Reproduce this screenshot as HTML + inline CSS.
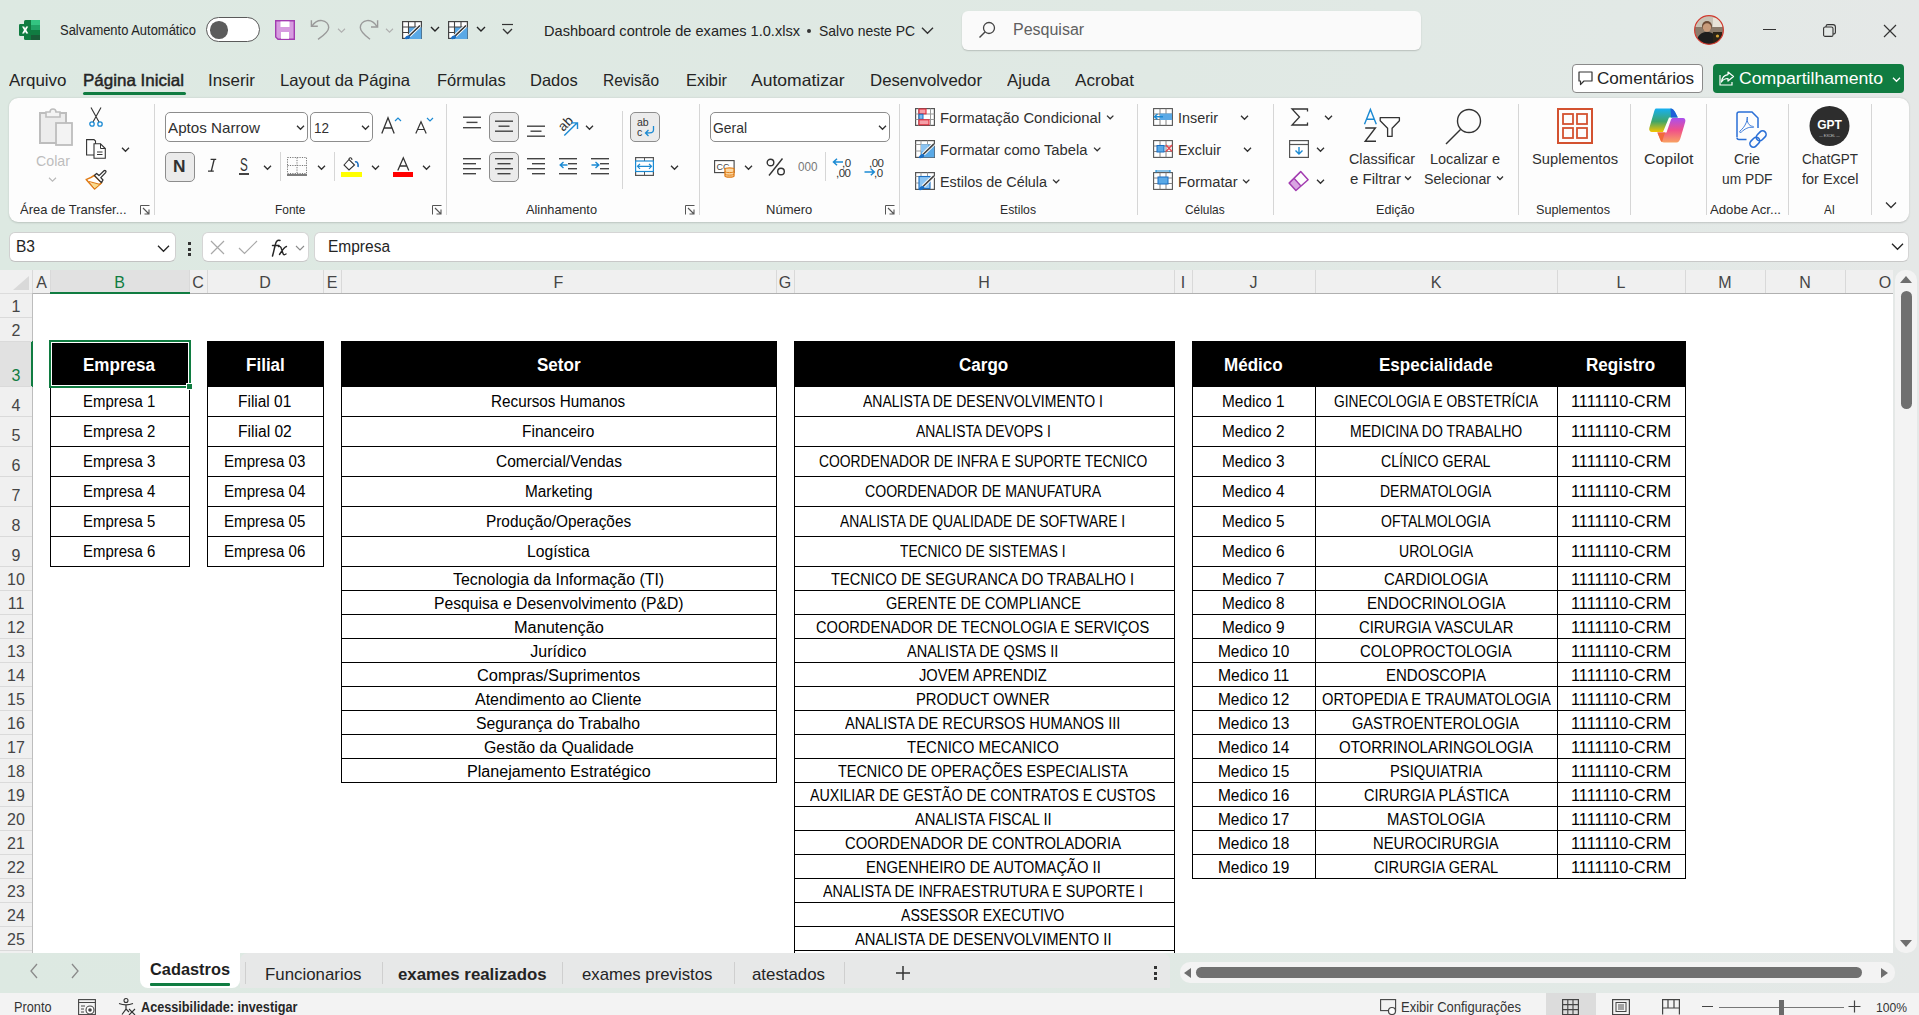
<!DOCTYPE html><html><head><meta charset="utf-8"><style>
html,body{margin:0;padding:0;width:1919px;height:1015px;overflow:hidden;}
body{position:relative;background:linear-gradient(90deg,#dde9e2 0%,#e0e9e4 60%,#e2e9e6 85%,#e5e8e7 100%);font-family:"Liberation Sans",sans-serif;}
.t{position:absolute;white-space:nowrap;line-height:1;transform-origin:0 0;}
svg{overflow:visible}
</style></head><body>
<svg style="position:absolute;left:19px;top:20px;" width="21" height="20" viewBox="0 0 21 20"><rect x="5" y="0" width="16" height="20" rx="1.5" fill="#107c41"/>
      <rect x="12" y="0" width="9" height="5" fill="#33c481"/><rect x="12" y="5" width="9" height="5" fill="#21a366"/>
      <rect x="12" y="10" width="9" height="5" fill="#107c41"/><rect x="12" y="15" width="9" height="5" fill="#185c37"/>
      <rect x="0" y="4" width="12" height="12" rx="1.2" fill="#107c41"/>
      <path d="M3 6.5 L5.2 6.5 L6.1 8.6 L7.1 6.5 L9.2 6.5 L7.3 10 L9.3 13.5 L7.1 13.5 L6.1 11.4 L5.1 13.5 L3 13.5 L5 10 Z" fill="#fff"/></svg>
<div class="t" style="left:60.00px;top:23.10px;font-size:14px;color:#242424;transform:scaleX(0.9246);">Salvamento Automático</div>
<div style="position:absolute;left:206px;top:17px;width:54px;height:25px;border:1.3px solid #5a5a5a;border-radius:13px;background:#fff;box-sizing:border-box"></div>
<div style="position:absolute;left:210px;top:21px;width:17.5px;height:17.5px;background:#5c5c5c;border-radius:50%"></div>
<svg style="position:absolute;left:275px;top:20px;" width="20" height="20" viewBox="0 0 20 20"><path d="M0.7 0.7 H19.3 V19.3 H3 L0.7 17 Z" fill="#d79be0" stroke="#a23cb0" stroke-width="1.4"/>
      <rect x="5.5" y="1.5" width="9" height="5.5" fill="#fff"/><rect x="6" y="12" width="8" height="6.8" fill="#fff"/></svg>
<svg style="position:absolute;left:310px;top:20px;" width="20" height="20" viewBox="0 0 20 20"><path d="M1.4 0.3 V6.3 H7.8" fill="none" stroke="#9a9a9a" stroke-width="1.4"/><path d="M2 6 C5 1.5 9 0.3 12 0.6 C16 1 18.7 4 18.7 7.5 C18.7 11 16 14 8 19.3" fill="none" stroke="#9a9a9a" stroke-width="1.4"/></svg>
<svg style="position:absolute;left:337.0px;top:26.5px;" width="9.0" height="7.0" viewBox="0 0 9.0 7.0"><path d="M1 1.75 L4.5 5.25 L8.0 1.75" fill="none" stroke="#b0b0b0" stroke-width="1.1"/></svg>
<svg style="position:absolute;left:359px;top:20px;" width="20" height="20" viewBox="0 0 20 20"><path d="M18.6 0.3 V7 H12" fill="none" stroke="#9a9a9a" stroke-width="1.4"/><path d="M18 6.7 C15 1.5 11 0.3 8 0.6 C4 1 1.3 4 1.3 7.5 C1.3 11 4 14 11 19.3" fill="none" stroke="#9a9a9a" stroke-width="1.4"/></svg>
<svg style="position:absolute;left:385.0px;top:26.5px;" width="9.0" height="7.0" viewBox="0 0 9.0 7.0"><path d="M1 1.75 L4.5 5.25 L8.0 1.75" fill="none" stroke="#b0b0b0" stroke-width="1.1"/></svg>
<svg style="position:absolute;left:402px;top:21px;" width="20" height="18" viewBox="0 0 20 18"><rect x="0.6" y="0.6" width="18.8" height="16.8" fill="#fff" stroke="#444" stroke-width="1.2"/>
        <rect x="6.5" y="6" width="13" height="12" fill="#5aa9e6"/>
        <path d="M0.6 6 H19.4 M0.6 11.5 H6.5 M6.5 0.6 V17.4 M13 0.6 V6" stroke="#444" stroke-width="1.1"/>
        <path d="M6.5 15.5 L18 4.5" stroke="#fff" stroke-width="3.4"/><path d="M6.5 15.5 L18 4.5" stroke="#333" stroke-width="1.6"/>
        <path d="M2.5 18 C3.5 15 5 14 7.5 14.5 L8.5 16 C8 17.5 6 18.5 2.5 18 Z" fill="#1b6ec2"/></svg>
<svg style="position:absolute;left:429.5px;top:25px;" width="10" height="8" viewBox="0 0 10 8"><path d="M1 2.0 L5 6.0 L9 2.0" fill="none" stroke="#242424" stroke-width="1.4"/></svg>
<svg style="position:absolute;left:448px;top:21px;" width="20" height="18" viewBox="0 0 20 18"><rect x="0.6" y="0.6" width="18.8" height="16.8" fill="#fff" stroke="#444" stroke-width="1.2"/>
        <rect x="6.5" y="6" width="13" height="12" fill="#5aa9e6"/>
        <path d="M0.6 6 H19.4 M0.6 11.5 H6.5 M6.5 0.6 V17.4 M13 0.6 V6" stroke="#444" stroke-width="1.1"/>
        <path d="M6.5 15.5 L18 4.5" stroke="#fff" stroke-width="3.4"/><path d="M6.5 15.5 L18 4.5" stroke="#333" stroke-width="1.6"/>
        <path d="M2.5 18 C3.5 15 5 14 7.5 14.5 L8.5 16 C8 17.5 6 18.5 2.5 18 Z" fill="#1b6ec2"/></svg>
<svg style="position:absolute;left:475.5px;top:25px;" width="10" height="8" viewBox="0 0 10 8"><path d="M1 2.0 L5 6.0 L9 2.0" fill="none" stroke="#242424" stroke-width="1.4"/></svg>
<svg style="position:absolute;left:501px;top:23px;" width="13" height="13" viewBox="0 0 13 13"><path d="M1 1.5 H12" stroke="#333" stroke-width="1.2"/><path d="M2 6 L6.5 10.5 L11 6" fill="none" stroke="#333" stroke-width="1.3"/></svg>
<div class="t" style="left:543.50px;top:23.25px;font-size:15px;color:#242424;transform:scaleX(0.9716);">Dashboard controle de exames 1.0.xlsx</div>
<div style="position:absolute;left:807px;top:29px;width:4px;height:4px;background:#333;border-radius:50%"></div>
<div class="t" style="left:819.00px;top:23.25px;font-size:15px;color:#242424;transform:scaleX(0.9285);">Salvo neste PC</div>
<svg style="position:absolute;left:920.5px;top:24.5px;" width="13.0" height="11.0" viewBox="0 0 13.0 11.0"><path d="M1 2.75 L6.5 8.25 L12.0 2.75" fill="none" stroke="#333" stroke-width="1.4"/></svg>
<div style="position:absolute;left:962px;top:11px;width:459px;height:39px;background:#fafafa;border-radius:6px;box-shadow:0 1px 1.5px rgba(0,0,0,0.18)"></div>
<svg style="position:absolute;left:978px;top:21px;" width="18" height="18" viewBox="0 0 18 18"><circle cx="11" cy="7" r="5.5" fill="none" stroke="#444" stroke-width="1.3"/><path d="M7 11 L1.5 16.5" stroke="#444" stroke-width="1.4"/></svg>
<div class="t" style="left:1013.00px;top:21.90px;font-size:16px;color:#5f5f5f;">Pesquisar</div>
<svg style="position:absolute;left:1694px;top:15px;" width="30" height="30" viewBox="0 0 30 30"><defs><clipPath id="av"><circle cx="15" cy="15" r="14.3"/></clipPath></defs>
      <g clip-path="url(#av)"><rect width="30" height="30" fill="#8a7a6a"/><rect x="0" y="0" width="30" height="12" fill="#c9c2b5"/>
      <rect x="19" y="3" width="9" height="9" fill="#e8e3d8"/><circle cx="13" cy="11" r="5" fill="#6b4a35"/><circle cx="13" cy="12.5" r="4.2" fill="#c89b7b"/>
      <path d="M2 30 C3 19 8 17 13 17 C18 17 23 19 24 30 Z" fill="#1e1e1e"/><rect x="19" y="17" width="9" height="11" fill="#2b2418"/><circle cx="23.5" cy="21" r="1.6" fill="#d4a437"/></g>
      <circle cx="15" cy="15" r="14.4" fill="none" stroke="#d23b30" stroke-width="1.2"/></svg>
<div style="position:absolute;left:1763px;top:29px;width:13px;height:1.2px;background:#333"></div>
<svg style="position:absolute;left:1823px;top:24px;" width="13" height="13" viewBox="0 0 13 13"><rect x="0.6" y="3" width="9.4" height="9.4" rx="1.5" fill="none" stroke="#333" stroke-width="1.1"/><path d="M3 3 V2.5 C3 1.5 3.5 0.6 4.8 0.6 H10 C11.4 0.6 12.4 1.6 12.4 3 V8.2 C12.4 9.5 11.5 10 10 10" fill="none" stroke="#333" stroke-width="1.1"/></svg>
<svg style="position:absolute;left:1883px;top:24px;" width="14" height="14" viewBox="0 0 14 14"><path d="M1 1 L13 13 M13 1 L1 13" stroke="#333" stroke-width="1.2"/></svg>
<div class="t" style="left:8.50px;top:71.97px;font-size:16.5px;color:#242424;transform:scaleX(1.0277);">Arquivo</div>
<div class="t" style="left:83.00px;top:71.97px;font-size:16.5px;color:#242424;transform:scaleX(1.0290);-webkit-text-stroke:0.45px #242424;">Página Inicial</div>
<div class="t" style="left:208.00px;top:71.97px;font-size:16.5px;color:#242424;transform:scaleX(1.0252);">Inserir</div>
<div class="t" style="left:280.00px;top:71.97px;font-size:16.5px;color:#242424;transform:scaleX(1.0121);">Layout da Página</div>
<div class="t" style="left:437.00px;top:71.97px;font-size:16.5px;color:#242424;">Fórmulas</div>
<div class="t" style="left:530.00px;top:71.97px;font-size:16.5px;color:#242424;">Dados</div>
<div class="t" style="left:603.00px;top:71.97px;font-size:16.5px;color:#242424;transform:scaleX(0.9394);">Revisão</div>
<div class="t" style="left:686.00px;top:71.97px;font-size:16.5px;color:#242424;transform:scaleX(0.9937);">Exibir</div>
<div class="t" style="left:751.00px;top:71.97px;font-size:16.5px;color:#242424;transform:scaleX(1.0620);">Automatizar</div>
<div class="t" style="left:870.00px;top:71.97px;font-size:16.5px;color:#242424;transform:scaleX(1.0176);">Desenvolvedor</div>
<div class="t" style="left:1007.00px;top:71.97px;font-size:16.5px;color:#242424;transform:scaleX(1.0189);">Ajuda</div>
<div class="t" style="left:1075.00px;top:71.97px;font-size:16.5px;color:#242424;transform:scaleX(1.0375);">Acrobat</div>
<div style="position:absolute;left:83px;top:92px;width:103px;height:3px;background:#107c41;border-radius:2px"></div>
<div style="position:absolute;left:1572px;top:64px;width:131px;height:29px;background:#fff;border:1px solid #8a8a8a;border-radius:4px;box-sizing:border-box"></div>
<svg style="position:absolute;left:1578px;top:71px;" width="15" height="15" viewBox="0 0 15 15"><path d="M1 1 H14 V10 H6 L2.5 13.5 V10 H1 Z" fill="none" stroke="#333" stroke-width="1.2" stroke-linejoin="round"/></svg>
<div class="t" style="left:1597.00px;top:71.40px;font-size:16px;color:#242424;transform:scaleX(1.0694);">Comentários</div>
<div style="position:absolute;left:1713px;top:64px;width:191px;height:29px;background:#107c41;border-radius:4px"></div>
<svg style="position:absolute;left:1719px;top:70px;" width="16" height="16" viewBox="0 0 16 16"><path d="M9 2 L14.5 6.5 L9 11 V8.5 C6 8.5 4 9.5 2.5 12 C3 7.5 5.5 5 9 4.6 Z" fill="none" stroke="#fff" stroke-width="1.2" stroke-linejoin="round"/><path d="M1 5 V15 H13 V12" fill="none" stroke="#fff" stroke-width="1.2"/></svg>
<div class="t" style="left:1739.00px;top:71.40px;font-size:16px;color:#fff;transform:scaleX(1.1015);">Compartilhamento</div>
<svg style="position:absolute;left:1891.5px;top:75.5px;" width="9.0" height="7.0" viewBox="0 0 9.0 7.0"><path d="M1 1.75 L4.5 5.25 L8.0 1.75" fill="none" stroke="#fff" stroke-width="1.3"/></svg>
<div style="position:absolute;left:9px;top:98px;width:1900px;height:124px;background:#fdfdfd;border-radius:9px;box-shadow:0 0.5px 2px rgba(0,0,0,0.16)"></div>
<div style="position:absolute;left:154px;top:104px;width:1px;height:111px;background:#d6d6d6"></div>
<div style="position:absolute;left:446px;top:104px;width:1px;height:111px;background:#d6d6d6"></div>
<div style="position:absolute;left:699px;top:104px;width:1px;height:111px;background:#d6d6d6"></div>
<div style="position:absolute;left:899px;top:104px;width:1px;height:111px;background:#d6d6d6"></div>
<div style="position:absolute;left:1137px;top:104px;width:1px;height:111px;background:#d6d6d6"></div>
<div style="position:absolute;left:1273px;top:104px;width:1px;height:111px;background:#d6d6d6"></div>
<div style="position:absolute;left:1518px;top:104px;width:1px;height:111px;background:#d6d6d6"></div>
<div style="position:absolute;left:1630px;top:104px;width:1px;height:111px;background:#d6d6d6"></div>
<div style="position:absolute;left:1706px;top:104px;width:1px;height:111px;background:#d6d6d6"></div>
<div style="position:absolute;left:1788px;top:104px;width:1px;height:111px;background:#d6d6d6"></div>
<div style="position:absolute;left:1871px;top:104px;width:1px;height:111px;background:#d6d6d6"></div>
<div class="t" style="left:20.00px;top:202.53px;font-size:13.5px;color:#2b2b2b;transform:scaleX(0.9589);">Área de Transfer...</div>
<div class="t" style="left:274.50px;top:202.53px;font-size:13.5px;color:#2b2b2b;transform:scaleX(0.8835);">Fonte</div>
<div class="t" style="left:526.00px;top:202.53px;font-size:13.5px;color:#2b2b2b;transform:scaleX(0.9460);">Alinhamento</div>
<div class="t" style="left:765.70px;top:202.53px;font-size:13.5px;color:#2b2b2b;transform:scaleX(0.9642);">Número</div>
<div class="t" style="left:999.50px;top:202.53px;font-size:13.5px;color:#2b2b2b;transform:scaleX(0.9054);">Estilos</div>
<div class="t" style="left:1184.60px;top:202.53px;font-size:13.5px;color:#2b2b2b;transform:scaleX(0.8795);">Células</div>
<div class="t" style="left:1376.00px;top:202.53px;font-size:13.5px;color:#2b2b2b;transform:scaleX(0.9351);">Edição</div>
<div class="t" style="left:1536.00px;top:202.53px;font-size:13.5px;color:#2b2b2b;transform:scaleX(0.9391);">Suplementos</div>
<div class="t" style="left:1710.00px;top:202.53px;font-size:13.5px;color:#2b2b2b;transform:scaleX(0.9752);">Adobe Acr...</div>
<div class="t" style="left:1823.80px;top:202.53px;font-size:13.5px;color:#2b2b2b;transform:scaleX(0.8545);">AI</div>
<svg style="position:absolute;left:140px;top:205px;" width="10" height="10" viewBox="0 0 10 10"><path d="M0.5 9.5 V0.5 H9.5" fill="none" stroke="#555" stroke-width="1"/><path d="M3 3 L9 9 M9 4.5 V9 H4.5" fill="none" stroke="#555" stroke-width="1.1"/></svg>
<svg style="position:absolute;left:431.5px;top:205px;" width="10" height="10" viewBox="0 0 10 10"><path d="M0.5 9.5 V0.5 H9.5" fill="none" stroke="#555" stroke-width="1"/><path d="M3 3 L9 9 M9 4.5 V9 H4.5" fill="none" stroke="#555" stroke-width="1.1"/></svg>
<svg style="position:absolute;left:685px;top:205px;" width="10" height="10" viewBox="0 0 10 10"><path d="M0.5 9.5 V0.5 H9.5" fill="none" stroke="#555" stroke-width="1"/><path d="M3 3 L9 9 M9 4.5 V9 H4.5" fill="none" stroke="#555" stroke-width="1.1"/></svg>
<svg style="position:absolute;left:885px;top:205px;" width="10" height="10" viewBox="0 0 10 10"><path d="M0.5 9.5 V0.5 H9.5" fill="none" stroke="#555" stroke-width="1"/><path d="M3 3 L9 9 M9 4.5 V9 H4.5" fill="none" stroke="#555" stroke-width="1.1"/></svg>
<svg style="position:absolute;left:39px;top:108px;" width="34" height="38" viewBox="0 0 34 38"><rect x="1" y="5" width="26" height="30" fill="#ececec" stroke="#bdbdbd" stroke-width="2"/>
      <path d="M7 9 V4 H11 C11 0 17 0 17 4 H21 V9 Z" fill="#f4f4f4" stroke="#bdbdbd" stroke-width="1.6"/>
      <rect x="17" y="15" width="16" height="22" fill="#f3f3f3" stroke="#bdbdbd" stroke-width="1.8"/></svg>
<div class="t" style="left:35.50px;top:152.75px;font-size:15px;color:#bdbdbd;transform:scaleX(0.9485);">Colar</div>
<svg style="position:absolute;left:48.0px;top:175.5px;" width="9.0" height="7.0" viewBox="0 0 9.0 7.0"><path d="M1 1.75 L4.5 5.25 L8.0 1.75" fill="none" stroke="#b8b8b8" stroke-width="1.1"/></svg>
<svg style="position:absolute;left:89px;top:107px;" width="14" height="20" viewBox="0 0 14 20"><path d="M2 0.5 L10 15 M12 0.5 L4 15" stroke="#333" stroke-width="1.1"/><circle cx="3" cy="17" r="2.2" fill="#fff" stroke="#1b8ad3" stroke-width="1.3"/><circle cx="11" cy="17" r="2.2" fill="#fff" stroke="#1b8ad3" stroke-width="1.3"/></svg>
<svg style="position:absolute;left:86px;top:139px;" width="20" height="20" viewBox="0 0 20 20"><path d="M0.6 0.6 H8 L9.5 2 V16 H0.6 Z" fill="#fff" stroke="#333" stroke-width="1.1"/>
      <path d="M8 4.8 H14.5 L19.3 9.5 V19.3 H8 Z" fill="#fff" stroke="#333" stroke-width="1.1"/><path d="M14.5 4.8 V9.5 H19.3" fill="none" stroke="#333" stroke-width="1"/>
      <path d="M11 13 H16.5 M11 15.5 H16.5" stroke="#333" stroke-width="1"/></svg>
<svg style="position:absolute;left:120.5px;top:145.5px;" width="9.0" height="7.0" viewBox="0 0 9.0 7.0"><path d="M1 1.75 L4.5 5.25 L8.0 1.75" fill="none" stroke="#303030" stroke-width="1.3"/></svg>
<svg style="position:absolute;left:80px;top:165px;" width="30" height="30" viewBox="0 0 30 30"><path d="M14.2 10.4 C11 13 8.5 13.6 6.2 14.4 L14.6 24 L21.6 17.6 Z" fill="#fff" stroke="#e07b14" stroke-width="1.5" stroke-linejoin="round"/><path d="M10.5 17.5 L19.5 19.5 L14.8 23 Z" fill="#f9dc8c"/><path d="M9 16.5 L20.5 19.5" stroke="#e07b14" stroke-width="1.2"/><path d="M14.4 10.4 L16.6 8.4 L19 10.6 L24 5.8 C25 4.9 26.8 6.2 25.6 7.6 L20.8 12.6 L23 15 L21.4 17.6 Z" fill="#fff" stroke="#333" stroke-width="1.3" stroke-linejoin="round"/></svg>
<div style="position:absolute;left:165px;top:112px;width:143px;height:30px;background:#fff;border:1px solid #8d8d8d;border-radius:5px;box-sizing:border-box"></div>
<div class="t" style="left:168.00px;top:120.25px;font-size:15px;color:#303030;transform:scaleX(1.0125);">Aptos Narrow</div>
<svg style="position:absolute;left:295.5px;top:123.5px;" width="9.0" height="7.0" viewBox="0 0 9.0 7.0"><path d="M1 1.75 L4.5 5.25 L8.0 1.75" fill="none" stroke="#303030" stroke-width="1.3"/></svg>
<div style="position:absolute;left:310px;top:112px;width:63px;height:30px;background:#fff;border:1px solid #8d8d8d;border-radius:5px;box-sizing:border-box"></div>
<div class="t" style="left:313.60px;top:120.25px;font-size:15px;color:#303030;transform:scaleX(0.8990);">12</div>
<svg style="position:absolute;left:360.5px;top:123.5px;" width="9.0" height="7.0" viewBox="0 0 9.0 7.0"><path d="M1 1.75 L4.5 5.25 L8.0 1.75" fill="none" stroke="#303030" stroke-width="1.3"/></svg>
<svg style="position:absolute;left:381px;top:117px;" width="16" height="17" viewBox="0 0 16 17"><path d="M0.8 16.5 L7 0.8 L13.2 16.5 M3 11 H11" fill="none" stroke="#333" stroke-width="1.3"/></svg>
<svg style="position:absolute;left:394px;top:117px;" width="8" height="5" viewBox="0 0 8 5"><path d="M1 4 L4 1 L7 4" fill="none" stroke="#1b8ad3" stroke-width="1.2"/></svg>
<svg style="position:absolute;left:415px;top:121px;" width="13" height="13" viewBox="0 0 13 13"><path d="M0.8 12.5 L6 0.8 L11.2 12.5 M2.6 8.5 H9.4" fill="none" stroke="#333" stroke-width="1.2"/></svg>
<svg style="position:absolute;left:426px;top:117px;" width="8" height="5" viewBox="0 0 8 5"><path d="M1 1 L4 4 L7 1" fill="none" stroke="#1b8ad3" stroke-width="1.2"/></svg>
<div style="position:absolute;left:165px;top:152px;width:30px;height:30px;background:#ebebeb;border:1px solid #8d8d8d;border-radius:5px;box-sizing:border-box"></div>
<div class="t" style="left:173.00px;top:157.55px;font-size:17px;font-weight:bold;color:#303030;transform:scaleX(1.0181);">N</div>
<svg style="position:absolute;left:207px;top:158px;" width="12" height="15" viewBox="0 0 12 15"><path d="M3.6 1.4 H9.2 M1 13.2 H6.8" stroke="#333" stroke-width="1.3"/><path d="M7.2 1.4 L4.3 13.2" stroke="#333" stroke-width="1.4"/></svg>
<div class="t" style="left:239.60px;top:157.12px;font-size:17.5px;color:#303030;transform:scaleX(0.6682);">S</div>
<div style="position:absolute;left:239px;top:173px;width:10px;height:1.7px;background:#444"></div>
<svg style="position:absolute;left:262.5px;top:163.5px;" width="9.0" height="7.0" viewBox="0 0 9.0 7.0"><path d="M1 1.75 L4.5 5.25 L8.0 1.75" fill="none" stroke="#303030" stroke-width="1.3"/></svg>
<div style="position:absolute;left:280px;top:152px;width:1px;height:29px;background:#d6d6d6"></div>
<svg style="position:absolute;left:287px;top:157px;" width="20" height="19" viewBox="0 0 20 19"><rect x="0.5" y="0.5" width="19" height="16" fill="none" stroke="#777" stroke-width="1" stroke-dasharray="1.2 1.2"/><path d="M10 0.5 V17 M0.5 8.5 H19.5" stroke="#777" stroke-width="1" stroke-dasharray="1.2 1.2"/><path d="M0 18 H20" stroke="#444" stroke-width="1.4"/></svg>
<svg style="position:absolute;left:316.5px;top:163.5px;" width="9.0" height="7.0" viewBox="0 0 9.0 7.0"><path d="M1 1.75 L4.5 5.25 L8.0 1.75" fill="none" stroke="#303030" stroke-width="1.3"/></svg>
<div style="position:absolute;left:334px;top:152px;width:1px;height:29px;background:#d6d6d6"></div>
<svg style="position:absolute;left:341px;top:157px;" width="21" height="20" viewBox="0 0 21 20"><path d="M3 8 L8 2.5 L13.5 8 L8 13 Z" fill="#fff" stroke="#333" stroke-width="1.1"/><path d="M8 2.5 C8 0 11 0 11 3" fill="none" stroke="#333" stroke-width="1.1"/><path d="M14 5 C16.5 4 17.5 7 17 10" fill="none" stroke="#1b6ec2" stroke-width="1.6"/><rect x="0" y="15" width="21" height="5" fill="#ffff00"/></svg>
<svg style="position:absolute;left:370.5px;top:163.5px;" width="9.0" height="7.0" viewBox="0 0 9.0 7.0"><path d="M1 1.75 L4.5 5.25 L8.0 1.75" fill="none" stroke="#303030" stroke-width="1.3"/></svg>
<svg style="position:absolute;left:397px;top:157px;" width="13" height="14" viewBox="0 0 13 14"><path d="M0.8 13.5 L6.3 0.8 L11.8 13.5 M2.8 9 H9.8" fill="none" stroke="#333" stroke-width="1.3"/></svg>
<div style="position:absolute;left:393px;top:172px;width:20px;height:5px;background:#ff0000"></div>
<svg style="position:absolute;left:421.5px;top:163.5px;" width="9.0" height="7.0" viewBox="0 0 9.0 7.0"><path d="M1 1.75 L4.5 5.25 L8.0 1.75" fill="none" stroke="#303030" stroke-width="1.3"/></svg>
<div style="position:absolute;left:489px;top:112px;width:30px;height:30px;background:#ebebeb;border:1px solid #8d8d8d;border-radius:5px;box-sizing:border-box"></div>
<div style="position:absolute;left:489px;top:152px;width:30px;height:30px;background:#ebebeb;border:1px solid #8d8d8d;border-radius:5px;box-sizing:border-box"></div>
<svg style="position:absolute;left:463px;top:0px;" width="20" height="200" viewBox="0 0 20 200"><rect x="0" y="116.5" width="18" height="1.4" fill="#444"/><rect x="3.5" y="121.7" width="11" height="1.4" fill="#444"/><rect x="0" y="127" width="18" height="1.4" fill="#444"/></svg>
<svg style="position:absolute;left:495px;top:0px;" width="20" height="200" viewBox="0 0 20 200"><rect x="0" y="120.5" width="18" height="1.4" fill="#444"/><rect x="3.5" y="125.5" width="11" height="1.4" fill="#444"/><rect x="0" y="130.5" width="18" height="1.4" fill="#444"/></svg>
<svg style="position:absolute;left:527px;top:0px;" width="20" height="200" viewBox="0 0 20 200"><rect x="0" y="125.5" width="18" height="1.4" fill="#444"/><rect x="3.5" y="130.5" width="11" height="1.4" fill="#444"/><rect x="0" y="135.5" width="18" height="1.4" fill="#444"/></svg>
<svg style="position:absolute;left:463px;top:0px;" width="20" height="200" viewBox="0 0 20 200"><rect x="0" y="158" width="18" height="1.4" fill="#444"/><rect x="0" y="163" width="13" height="1.4" fill="#444"/><rect x="0" y="168" width="18" height="1.4" fill="#444"/><rect x="0" y="173" width="13" height="1.4" fill="#444"/></svg>
<svg style="position:absolute;left:495px;top:0px;" width="20" height="200" viewBox="0 0 20 200"><rect x="0" y="158" width="18" height="1.4" fill="#444"/><rect x="2.5" y="163" width="13" height="1.4" fill="#444"/><rect x="0" y="168" width="18" height="1.4" fill="#444"/><rect x="2.5" y="173" width="13" height="1.4" fill="#444"/></svg>
<svg style="position:absolute;left:527px;top:0px;" width="20" height="200" viewBox="0 0 20 200"><rect x="0" y="158" width="18" height="1.4" fill="#444"/><rect x="5" y="163" width="13" height="1.4" fill="#444"/><rect x="0" y="168" width="18" height="1.4" fill="#444"/><rect x="5" y="173" width="13" height="1.4" fill="#444"/></svg>
<svg style="position:absolute;left:559px;top:0px;" width="20" height="200" viewBox="0 0 20 200"><rect x="0" y="158" width="18" height="1.4" fill="#444"/><rect x="9" y="163" width="9" height="1.4" fill="#444"/><rect x="9" y="168" width="9" height="1.4" fill="#444"/><rect x="0" y="173" width="18" height="1.4" fill="#444"/></svg>
<svg style="position:absolute;left:591px;top:0px;" width="20" height="200" viewBox="0 0 20 200"><rect x="0" y="158" width="18" height="1.4" fill="#444"/><rect x="9" y="163" width="9" height="1.4" fill="#444"/><rect x="9" y="168" width="9" height="1.4" fill="#444"/><rect x="0" y="173" width="18" height="1.4" fill="#444"/></svg>
<svg style="position:absolute;left:559px;top:161px;" width="9" height="8" viewBox="0 0 9 8"><path d="M8.5 4 H1.5 M4.5 1 L1.2 4 L4.5 7" fill="none" stroke="#1b8ad3" stroke-width="1.4"/></svg>
<svg style="position:absolute;left:591px;top:161px;" width="9" height="8" viewBox="0 0 9 8"><path d="M0.5 4 H7.5 M4.5 1 L7.8 4 L4.5 7" fill="none" stroke="#1b8ad3" stroke-width="1.4"/></svg>
<svg style="position:absolute;left:556px;top:112px;" width="22" height="25" viewBox="0 0 22 25"><text x="-0.5" y="17" transform="rotate(-45 7 9)" font-family="Liberation Sans" font-size="13.5" fill="#333">ab</text><path d="M8.3 23.6 L21 10.9 M15 10.9 H21.5 V17" fill="none" stroke="#1b8ad3" stroke-width="1.4"/></svg>
<svg style="position:absolute;left:585.0px;top:123.5px;" width="9.0" height="7.0" viewBox="0 0 9.0 7.0"><path d="M1 1.75 L4.5 5.25 L8.0 1.75" fill="none" stroke="#303030" stroke-width="1.3"/></svg>
<div style="position:absolute;left:622px;top:111px;width:1px;height:78px;background:#d6d6d6"></div>
<div style="position:absolute;left:630px;top:112px;width:30px;height:30px;background:#ebebeb;border:1px solid #8d8d8d;border-radius:5px;box-sizing:border-box"></div>
<svg style="position:absolute;left:637px;top:117px;" width="18" height="21" viewBox="0 0 18 21"><text x="0" y="9" font-family="Liberation Sans" font-size="10.5" fill="#333">ab</text><text x="0" y="19" font-family="Liberation Sans" font-size="10.5" fill="#333">c</text><path d="M16.5 9 V13 C16.5 16 14 16 9 16 M11.5 13 L8.5 16 L11.5 19" fill="none" stroke="#1b8ad3" stroke-width="1.3"/></svg>
<svg style="position:absolute;left:635px;top:157px;" width="19" height="19" viewBox="0 0 19 19"><rect x="0.6" y="0.6" width="17.8" height="17.8" fill="#fff" stroke="#555" stroke-width="1.2"/><path d="M9.5 0.6 V18.4" stroke="#555" stroke-width="1"/><rect x="0.6" y="4" width="17.8" height="10.5" fill="#fff" stroke="#1b8ad3" stroke-width="1.2"/><path d="M2.5 9.3 H16.5 M5 6.8 L2.5 9.3 L5 11.8 M14 6.8 L16.5 9.3 L14 11.8" fill="none" stroke="#1b8ad3" stroke-width="1.2"/></svg>
<svg style="position:absolute;left:669.5px;top:163.5px;" width="9.0" height="7.0" viewBox="0 0 9.0 7.0"><path d="M1 1.75 L4.5 5.25 L8.0 1.75" fill="none" stroke="#303030" stroke-width="1.3"/></svg>
<div style="position:absolute;left:710px;top:112px;width:180px;height:30px;background:#fff;border:1px solid #8d8d8d;border-radius:5px;box-sizing:border-box"></div>
<div class="t" style="left:713.00px;top:119.75px;font-size:15px;color:#303030;transform:scaleX(0.9269);">Geral</div>
<svg style="position:absolute;left:877.5px;top:123.5px;" width="9.0" height="7.0" viewBox="0 0 9.0 7.0"><path d="M1 1.75 L4.5 5.25 L8.0 1.75" fill="none" stroke="#303030" stroke-width="1.3"/></svg>
<svg style="position:absolute;left:714px;top:160px;" width="21" height="18" viewBox="0 0 21 18"><rect x="0.6" y="0.6" width="19.5" height="12" fill="#fff" stroke="#444" stroke-width="1.1"/><text x="2.5" y="10" font-family="Liberation Sans" font-size="9" fill="#444">CC</text><path d="M11 9 C11 7.5 20 7.5 20 9 V16 C20 17.5 11 17.5 11 16 Z" fill="#fbd9a5" stroke="#e07b14" stroke-width="1.3"/><path d="M11 11.5 C11 13 20 13 20 11.5 M11 14 C11 15.5 20 15.5 20 14" fill="none" stroke="#e07b14" stroke-width="1"/></svg>
<svg style="position:absolute;left:743.5px;top:163.5px;" width="9.0" height="7.0" viewBox="0 0 9.0 7.0"><path d="M1 1.75 L4.5 5.25 L8.0 1.75" fill="none" stroke="#303030" stroke-width="1.3"/></svg>
<svg style="position:absolute;left:766px;top:158px;" width="20" height="18" viewBox="0 0 20 18"><circle cx="4.5" cy="4.5" r="3.3" fill="none" stroke="#333" stroke-width="1.4"/><circle cx="15" cy="13.5" r="3.3" fill="none" stroke="#333" stroke-width="1.4"/><path d="M16.5 0.5 L3 17.5" stroke="#333" stroke-width="1.4"/></svg>
<div class="t" style="left:798.00px;top:160.80px;font-size:12px;color:#777;transform:scaleX(0.9739);">000</div>
<div style="position:absolute;left:825px;top:152px;width:1px;height:29px;background:#d6d6d6"></div>
<svg style="position:absolute;left:832px;top:157px;" width="22" height="20" viewBox="0 0 22 20"><path d="M11 5 H1.8 M5 1.8 L1.5 5 L5 8.2" fill="none" stroke="#1b8ad3" stroke-width="1.5"/><text x="10" y="10" font-family="Liberation Sans" font-size="11.5" fill="#333" letter-spacing="-0.5">,0</text><text x="4" y="19.5" font-family="Liberation Sans" font-size="11.5" fill="#333" letter-spacing="-0.5">,00</text></svg>
<svg style="position:absolute;left:864px;top:157px;" width="22" height="20" viewBox="0 0 22 20"><text x="5" y="10" font-family="Liberation Sans" font-size="11.5" fill="#333" letter-spacing="-0.5">,00</text><path d="M0.5 15 H10 M6.8 11.8 L10.3 15 L6.8 18.2" fill="none" stroke="#1b8ad3" stroke-width="1.5"/><text x="10" y="19.5" font-family="Liberation Sans" font-size="11.5" fill="#333" letter-spacing="-0.5">,0</text></svg>
<svg style="position:absolute;left:915px;top:108px;" width="20" height="18" viewBox="0 0 20 18"><rect x="0.6" y="0.6" width="18.8" height="16.8" fill="#fff" stroke="#555" stroke-width="1.2"/><path d="M0.6 6 H19.4 M0.6 11.5 H19.4 M3.5 0.6 V17.4 M15.5 0.6 V17.4" stroke="#999" stroke-width="1"/><rect x="4" y="1" width="7" height="4.8" fill="#f4a0a8" stroke="#e02a3a" stroke-width="1.1"/><rect x="4" y="6.2" width="4" height="5" fill="#7ab8ec" stroke="#1b6ec2" stroke-width="1"/><rect x="4" y="11.8" width="10" height="5" fill="#f4a0a8" stroke="#e02a3a" stroke-width="1.1"/></svg>
<div class="t" style="left:940.30px;top:109.83px;font-size:15.5px;color:#303030;transform:scaleX(0.9583);">Formatação Condicional</div>
<svg style="position:absolute;left:1106.3px;top:113.8px;" width="8.4" height="6.4" viewBox="0 0 8.4 6.4"><path d="M1 1.6 L4.2 4.800000000000001 L7.4 1.6" fill="none" stroke="#303030" stroke-width="1.3"/></svg>
<svg style="position:absolute;left:915px;top:140px;" width="20" height="18" viewBox="0 0 20 18"><rect x="0.6" y="0.6" width="18.8" height="16.8" fill="#fff" stroke="#555" stroke-width="1.2"/><path d="M0.6 4.5 H19.4 M0.6 11 H6 M6 0.6 V17.4 M12.5 0.6 V4.5" stroke="#999" stroke-width="1"/><rect x="6" y="4.5" width="13.4" height="12.9" fill="#5aa9e6"/><rect x="6" y="4.5" width="7" height="7" fill="#8cc4f2"/><path d="M8 14.5 L19 3.8" stroke="#fff" stroke-width="3.6"/><path d="M8 14.5 L19 3.8" stroke="#444" stroke-width="1.7"/><path d="M3.5 18 C4.5 14.5 6.5 13.5 8.8 14 L9.5 15.5 C9 17.5 6.5 18.5 3.5 18 Z" fill="#1b6ec2"/></svg>
<div class="t" style="left:940.30px;top:141.82px;font-size:15.5px;color:#303030;transform:scaleX(0.9529);">Formatar como Tabela</div>
<svg style="position:absolute;left:1092.8px;top:145.8px;" width="8.4" height="6.4" viewBox="0 0 8.4 6.4"><path d="M1 1.6 L4.2 4.800000000000001 L7.4 1.6" fill="none" stroke="#303030" stroke-width="1.3"/></svg>
<svg style="position:absolute;left:915px;top:172px;" width="20" height="18" viewBox="0 0 20 18"><rect x="0.6" y="0.6" width="18.8" height="16.8" fill="#fff" stroke="#555" stroke-width="1.2"/><path d="M0.6 4.5 H19.4 M0.6 11 H6 M6 0.6 V17.4 M12.5 0.6 V4.5" stroke="#999" stroke-width="1"/><rect x="4" y="4.5" width="11" height="12" fill="#8cc4f2" stroke="#1b6ec2" stroke-width="1.1"/><path d="M8 14.5 L19 3.8" stroke="#fff" stroke-width="3.6"/><path d="M8 14.5 L19 3.8" stroke="#444" stroke-width="1.7"/><path d="M3.5 18 C4.5 14.5 6.5 13.5 8.8 14 L9.5 15.5 C9 17.5 6.5 18.5 3.5 18 Z" fill="#1b6ec2"/></svg>
<div class="t" style="left:940.30px;top:174.12px;font-size:15.5px;color:#303030;transform:scaleX(0.9268);">Estilos de Célula</div>
<svg style="position:absolute;left:1051.8px;top:177.8px;" width="8.4" height="6.4" viewBox="0 0 8.4 6.4"><path d="M1 1.6 L4.2 4.800000000000001 L7.4 1.6" fill="none" stroke="#303030" stroke-width="1.3"/></svg>
<svg style="position:absolute;left:1153px;top:108px;" width="20" height="18" viewBox="0 0 20 18"><rect x="0.6" y="0.6" width="18.8" height="16.8" fill="#fff" stroke="#555" stroke-width="1.1"/><path d="M0.6 6 H19.4 M0.6 11.5 H19.4 M7 0.6 V17.4 M13 0.6 V17.4" stroke="#777" stroke-width="0.9"/><rect x="7" y="5.5" width="12" height="6.5" fill="#5aa9e6"/><path d="M10 8.8 H1.5 M4.5 6 L1.5 8.8 L4.5 11.6" fill="none" stroke="#1b8ad3" stroke-width="1.4"/></svg>
<div class="t" style="left:1178.00px;top:109.83px;font-size:15.5px;color:#303030;transform:scaleX(0.9288);">Inserir</div>
<svg style="position:absolute;left:1240.1px;top:113.5px;" width="9.0" height="7.0" viewBox="0 0 9.0 7.0"><path d="M1 1.75 L4.5 5.25 L8.0 1.75" fill="none" stroke="#303030" stroke-width="1.3"/></svg>
<svg style="position:absolute;left:1153px;top:140px;" width="20" height="18" viewBox="0 0 20 18"><rect x="0.6" y="0.6" width="18.8" height="16.8" fill="#fff" stroke="#555" stroke-width="1.1"/><path d="M0.6 6 H19.4 M0.6 11.5 H19.4 M7 0.6 V17.4 M13 0.6 V17.4" stroke="#777" stroke-width="0.9"/><rect x="4" y="5.5" width="7" height="6.5" fill="#5aa9e6" stroke="#1b6ec2" stroke-width="1"/><path d="M13 5 L19 11.5 M19 5 L13 11.5" stroke="#e8474f" stroke-width="1.4"/></svg>
<div class="t" style="left:1178.00px;top:141.82px;font-size:15.5px;color:#303030;transform:scaleX(0.9245);">Excluir</div>
<svg style="position:absolute;left:1242.5px;top:145.5px;" width="9.0" height="7.0" viewBox="0 0 9.0 7.0"><path d="M1 1.75 L4.5 5.25 L8.0 1.75" fill="none" stroke="#303030" stroke-width="1.3"/></svg>
<svg style="position:absolute;left:1153px;top:170px;" width="20" height="20" viewBox="0 0 20 20"><rect x="0.6" y="2.6" width="18.8" height="16.8" fill="#fff" stroke="#555" stroke-width="1.1"/><path d="M0.6 8 H19.4 M0.6 13.5 H19.4 M7 2.6 V19.4 M13 2.6 V19.4" stroke="#777" stroke-width="0.9"/><rect x="5" y="7" width="10" height="7" fill="#5aa9e6" stroke="#1b6ec2" stroke-width="1"/><path d="M3 1 H17 M3 0 V2.5 M17 0 V2.5" stroke="#1b8ad3" stroke-width="1.1"/></svg>
<div class="t" style="left:1178.00px;top:174.12px;font-size:15.5px;color:#303030;transform:scaleX(0.9479);">Formatar</div>
<svg style="position:absolute;left:1242.3px;top:177.8px;" width="8.4" height="6.4" viewBox="0 0 8.4 6.4"><path d="M1 1.6 L4.2 4.800000000000001 L7.4 1.6" fill="none" stroke="#303030" stroke-width="1.3"/></svg>
<svg style="position:absolute;left:1291px;top:108px;" width="17" height="18" viewBox="0 0 17 18"><path d="M16.5 3.5 V1 H1 L8.5 9 L1 17 H16.5 V14.5" fill="none" stroke="#333" stroke-width="1.3"/></svg>
<svg style="position:absolute;left:1324.0px;top:113.5px;" width="9.0" height="7.0" viewBox="0 0 9.0 7.0"><path d="M1 1.75 L4.5 5.25 L8.0 1.75" fill="none" stroke="#303030" stroke-width="1.3"/></svg>
<svg style="position:absolute;left:1289px;top:140px;" width="20" height="18" viewBox="0 0 20 18"><rect x="0.6" y="0.6" width="18.8" height="16.8" fill="#fff" stroke="#555" stroke-width="1.2"/><path d="M0.6 4.5 H19.4" stroke="#555" stroke-width="1.2"/><path d="M10 7 V14 M6.5 10.5 L10 14 L13.5 10.5" fill="none" stroke="#1b8ad3" stroke-width="1.4"/></svg>
<svg style="position:absolute;left:1315.5px;top:145.5px;" width="9.0" height="7.0" viewBox="0 0 9.0 7.0"><path d="M1 1.75 L4.5 5.25 L8.0 1.75" fill="none" stroke="#303030" stroke-width="1.3"/></svg>
<svg style="position:absolute;left:1285px;top:168px;" width="26" height="26" viewBox="0 0 26 26"><path d="M4.1 15.1 L9 10.3 L15.7 17.8 L10.9 22.5 Z" fill="#d9a5e2"/><path d="M4.1 15.1 L15.7 3.6 L23.1 11.7 L10.9 22.5 Z" fill="none" stroke="#a23cb0" stroke-width="1.5" stroke-linejoin="round"/><path d="M9 10.3 L15.7 17.8" stroke="#a23cb0" stroke-width="1.3"/></svg>
<svg style="position:absolute;left:1315.5px;top:177.5px;" width="9.0" height="7.0" viewBox="0 0 9.0 7.0"><path d="M1 1.75 L4.5 5.25 L8.0 1.75" fill="none" stroke="#303030" stroke-width="1.3"/></svg>
<svg style="position:absolute;left:1360px;top:105px;" width="45" height="40" viewBox="0 0 45 40"><path d="M4.5 19.3 L10.4 4.4 L16.3 19.3 M6.5 14.3 L14.3 14.3" fill="none" stroke="#1b8ad3" stroke-width="1.4"/><path d="M5.2 23.0 L15.4 23.0 L5.2 36.3 L16.0 36.3" fill="none" stroke="#333" stroke-width="1.4"/><path d="M20.2 12.6 L39.4 12.6 L39.4 15.7 L32.1 23.2 L32.1 31.4 L27.6 31.4 L27.6 23.2 L20.2 15.7 Z" fill="#fff" stroke="#333" stroke-width="1.3" stroke-linejoin="round"/></svg>
<div class="t" style="left:1349.00px;top:150.62px;font-size:15.5px;color:#303030;transform:scaleX(0.9233);">Classificar</div>
<div class="t" style="left:1350.00px;top:170.82px;font-size:15.5px;color:#303030;transform:scaleX(0.9708);">e Filtrar</div>
<svg style="position:absolute;left:1404px;top:175px;" width="8" height="6" viewBox="0 0 8 6"><path d="M1 1.5 L4 4.5 L7 1.5" fill="none" stroke="#303030" stroke-width="1.3"/></svg>
<svg style="position:absolute;left:1445px;top:108px;" width="38" height="37" viewBox="0 0 38 37"><circle cx="24" cy="13" r="11.5" fill="none" stroke="#333" stroke-width="1.4"/><path d="M15.5 21.5 L1 36" stroke="#333" stroke-width="1.5"/></svg>
<div class="t" style="left:1429.50px;top:150.62px;font-size:15.5px;color:#303030;transform:scaleX(0.9338);">Localizar e</div>
<div class="t" style="left:1423.50px;top:170.82px;font-size:15.5px;color:#303030;transform:scaleX(0.9148);">Selecionar</div>
<svg style="position:absolute;left:1496px;top:175px;" width="8" height="6" viewBox="0 0 8 6"><path d="M1 1.5 L4 4.5 L7 1.5" fill="none" stroke="#303030" stroke-width="1.3"/></svg>
<svg style="position:absolute;left:1557px;top:108px;" width="36" height="36" viewBox="0 0 36 36"><rect x="1" y="1" width="34" height="34" fill="none" stroke="#d35230" stroke-width="2"/><rect x="6" y="6" width="10" height="10" fill="none" stroke="#d35230" stroke-width="1.8"/><rect x="20" y="6" width="10" height="10" fill="none" stroke="#d35230" stroke-width="1.8"/><rect x="6" y="20" width="10" height="10" fill="none" stroke="#d35230" stroke-width="1.8"/><rect x="20" y="20" width="10" height="10" fill="none" stroke="#d35230" stroke-width="1.8"/></svg>
<div class="t" style="left:1532.00px;top:150.62px;font-size:15.5px;color:#303030;transform:scaleX(0.9505);">Suplementos</div>
<svg style="position:absolute;left:1649px;top:108px;" width="38" height="35" viewBox="0 0 38 35"><defs><linearGradient id="cp1" x1="0" y1="0" x2="0" y2="1"><stop offset="0" stop-color="#16b0f4"/><stop offset="0.55" stop-color="#3fa56a"/><stop offset="1" stop-color="#f5c400"/></linearGradient>
      <linearGradient id="cp2" x1="0" y1="0" x2="0" y2="1"><stop offset="0" stop-color="#a94ff0"/><stop offset="0.5" stop-color="#f0508a"/><stop offset="1" stop-color="#f9a262"/></linearGradient></defs>
      <path d="M7 0.4 H21.5 C23.5 0.4 25 2 26 4 L28.8 9.6 H20 L14 24 H3 C1 24 -0.3 22 0.3 20 L5 4 C5.7 1.7 6 0.4 7 0.4 Z" fill="url(#cp1)"/>
      <path d="M21.5 0.4 C23.5 0.4 25 2 26 4 L28.8 9.6 H22 Z" fill="#1f5fd8"/>
      <path d="M24 9.9 H34 C36 9.9 36.8 12 36.2 14 L31.5 30 C30.8 32.5 29.5 34.5 27.5 34.5 H15 C13 34.5 12 33.5 11 31 L8.4 24.6 H17.5 L22 11.5 C22.3 10.5 23 9.9 24 9.9 Z" fill="url(#cp2)"/>
      <path d="M8.4 24.6 H16 L13 34 C12 33.5 11.5 32.5 11 31 Z" fill="#f26a3a"/></svg>
<div class="t" style="left:1643.50px;top:150.62px;font-size:15.5px;color:#303030;transform:scaleX(1.0259);">Copilot</div>
<svg style="position:absolute;left:1736px;top:111px;" width="32" height="36" viewBox="0 0 32 36"><path d="M1 26 V3 C1 1.8 1.8 1 3 1 H16 L22 7 V17 M10.5 28.5 H3 C1.8 28.5 1 27.7 1 26.5" fill="none" stroke="#2a6fd6" stroke-width="1.5"/><path d="M11.3 6 C11.5 10 9 16 4 20 C3 21.5 4.3 22 5.5 21 C8.5 18 13 15.5 16.5 16.5 C18 17 18.2 15.3 16.5 15.3 C13 15 10.5 11 11.3 6 Z" fill="none" stroke="#2a6fd6" stroke-width="0.9"/><g transform="rotate(-45 22 28)" fill="none" stroke="#2a6fd6" stroke-width="1.6"><rect x="12" y="24.5" width="11" height="7" rx="3.5"/><rect x="21" y="24.5" width="11" height="7" rx="3.5"/></g></svg>
<div class="t" style="left:1734.00px;top:150.62px;font-size:15.5px;color:#303030;transform:scaleX(0.9148);">Crie</div>
<div class="t" style="left:1722.00px;top:170.82px;font-size:15.5px;color:#303030;transform:scaleX(0.8885);">um PDF</div>
<svg style="position:absolute;left:1809px;top:106px;" width="41" height="40" viewBox="0 0 41 40"><circle cx="20.5" cy="20" r="20" fill="#2d2d2d"/><text x="20.5" y="23" text-anchor="middle" font-family="Liberation Sans" font-weight="bold" font-size="12" fill="#fff">GPT</text><text x="20.5" y="31" text-anchor="middle" font-family="Liberation Sans" font-size="3.5" fill="#ccc">— EXCEL —</text></svg>
<div class="t" style="left:1801.50px;top:150.62px;font-size:15.5px;color:#303030;transform:scaleX(0.8668);">ChatGPT</div>
<div class="t" style="left:1802.00px;top:170.82px;font-size:15.5px;color:#303030;transform:scaleX(0.9370);">for Excel</div>
<svg style="position:absolute;left:1885px;top:200px;" width="12" height="10" viewBox="0 0 12 10"><path d="M1 2.5 L6 7.5 L11 2.5" fill="none" stroke="#303030" stroke-width="1.3"/></svg>
<div style="position:absolute;left:0px;top:270px;width:1893px;height:683px;background:#ffffff"></div>
<div style="position:absolute;left:0px;top:270px;width:1893px;height:23px;background:#f0f0f0"></div>
<div style="position:absolute;left:0px;top:293px;width:33px;height:660px;background:#f0f0f0"></div>
<svg style="position:absolute;left:12px;top:275px;" width="18" height="16" viewBox="0 0 18 16"><path d="M17 1 L17 15 L1 15 Z" fill="#d9d9d9"/></svg>
<div style="position:absolute;left:50px;top:270px;width:139px;height:23px;background:#e1e1e1"></div>
<div style="position:absolute;left:32px;top:293px;width:1px;height:660px;background:#bdbdbd"></div>
<div style="position:absolute;left:0px;top:341px;width:32px;height:46px;background:#e1e1e1"></div>
<div style="position:absolute;left:31px;top:341px;width:2px;height:46px;background:#107c41"></div>
<div class="t" style="left:36.16px;top:275.40px;font-size:16px;color:#454545;">A</div>
<div style="position:absolute;left:50px;top:270px;width:1px;height:23px;background:#d9d9d9"></div>
<div class="t" style="left:114.16px;top:275.40px;font-size:16px;color:#107c41;">B</div>
<div style="position:absolute;left:189px;top:270px;width:1px;height:23px;background:#d9d9d9"></div>
<div class="t" style="left:192.22px;top:275.40px;font-size:16px;color:#454545;">C</div>
<div style="position:absolute;left:207px;top:270px;width:1px;height:23px;background:#d9d9d9"></div>
<div class="t" style="left:259.22px;top:275.40px;font-size:16px;color:#454545;">D</div>
<div style="position:absolute;left:323px;top:270px;width:1px;height:23px;background:#d9d9d9"></div>
<div class="t" style="left:326.66px;top:275.40px;font-size:16px;color:#454545;">E</div>
<div style="position:absolute;left:341px;top:270px;width:1px;height:23px;background:#d9d9d9"></div>
<div class="t" style="left:553.61px;top:275.40px;font-size:16px;color:#454545;">F</div>
<div style="position:absolute;left:776px;top:270px;width:1px;height:23px;background:#d9d9d9"></div>
<div class="t" style="left:778.78px;top:275.40px;font-size:16px;color:#454545;">G</div>
<div style="position:absolute;left:794px;top:270px;width:1px;height:23px;background:#d9d9d9"></div>
<div class="t" style="left:978.22px;top:275.40px;font-size:16px;color:#454545;">H</div>
<div style="position:absolute;left:1174px;top:270px;width:1px;height:23px;background:#d9d9d9"></div>
<div class="t" style="left:1180.78px;top:275.40px;font-size:16px;color:#454545;">I</div>
<div style="position:absolute;left:1192px;top:270px;width:1px;height:23px;background:#d9d9d9"></div>
<div class="t" style="left:1249.50px;top:275.40px;font-size:16px;color:#454545;">J</div>
<div style="position:absolute;left:1315px;top:270px;width:1px;height:23px;background:#d9d9d9"></div>
<div class="t" style="left:1430.66px;top:275.40px;font-size:16px;color:#454545;">K</div>
<div style="position:absolute;left:1557px;top:270px;width:1px;height:23px;background:#d9d9d9"></div>
<div class="t" style="left:1616.55px;top:275.40px;font-size:16px;color:#454545;">L</div>
<div style="position:absolute;left:1685px;top:270px;width:1px;height:23px;background:#d9d9d9"></div>
<div class="t" style="left:1718.34px;top:275.40px;font-size:16px;color:#454545;">M</div>
<div style="position:absolute;left:1765px;top:270px;width:1px;height:23px;background:#d9d9d9"></div>
<div class="t" style="left:1799.22px;top:275.40px;font-size:16px;color:#454545;">N</div>
<div style="position:absolute;left:1845px;top:270px;width:1px;height:23px;background:#d9d9d9"></div>
<div class="t" style="left:1878.78px;top:275.40px;font-size:16px;color:#454545;">O</div>
<div style="position:absolute;left:33px;top:293px;width:1860px;height:1px;background:#b0b0b0"></div>
<div style="position:absolute;left:0px;top:293px;width:32px;height:1px;background:#dcdcdc"></div>
<div style="position:absolute;left:32px;top:270px;width:1px;height:23px;background:#d9d9d9"></div>
<div style="position:absolute;left:50px;top:292px;width:140px;height:2px;background:#107c41"></div>
<div style="position:absolute;left:0px;top:317px;width:32px;height:1px;background:#dadada"></div>
<div class="t" style="left:11.55px;top:299.40px;font-size:16px;color:#454545;">1</div>
<div style="position:absolute;left:0px;top:341px;width:32px;height:1px;background:#dadada"></div>
<div class="t" style="left:11.55px;top:323.40px;font-size:16px;color:#454545;">2</div>
<div style="position:absolute;left:0px;top:386px;width:32px;height:1px;background:#dadada"></div>
<div class="t" style="left:11.55px;top:368.40px;font-size:16px;color:#107c41;">3</div>
<div style="position:absolute;left:0px;top:416px;width:32px;height:1px;background:#dadada"></div>
<div class="t" style="left:11.55px;top:398.40px;font-size:16px;color:#454545;">4</div>
<div style="position:absolute;left:0px;top:446px;width:32px;height:1px;background:#dadada"></div>
<div class="t" style="left:11.55px;top:428.40px;font-size:16px;color:#454545;">5</div>
<div style="position:absolute;left:0px;top:476px;width:32px;height:1px;background:#dadada"></div>
<div class="t" style="left:11.55px;top:458.40px;font-size:16px;color:#454545;">6</div>
<div style="position:absolute;left:0px;top:506px;width:32px;height:1px;background:#dadada"></div>
<div class="t" style="left:11.55px;top:488.40px;font-size:16px;color:#454545;">7</div>
<div style="position:absolute;left:0px;top:536px;width:32px;height:1px;background:#dadada"></div>
<div class="t" style="left:11.55px;top:518.40px;font-size:16px;color:#454545;">8</div>
<div style="position:absolute;left:0px;top:566px;width:32px;height:1px;background:#dadada"></div>
<div class="t" style="left:11.55px;top:548.40px;font-size:16px;color:#454545;">9</div>
<div style="position:absolute;left:0px;top:590px;width:32px;height:1px;background:#dadada"></div>
<div class="t" style="left:7.10px;top:572.40px;font-size:16px;color:#454545;">10</div>
<div style="position:absolute;left:0px;top:614px;width:32px;height:1px;background:#dadada"></div>
<div class="t" style="left:7.70px;top:596.40px;font-size:16px;color:#454545;">11</div>
<div style="position:absolute;left:0px;top:638px;width:32px;height:1px;background:#dadada"></div>
<div class="t" style="left:7.10px;top:620.40px;font-size:16px;color:#454545;">12</div>
<div style="position:absolute;left:0px;top:662px;width:32px;height:1px;background:#dadada"></div>
<div class="t" style="left:7.10px;top:644.40px;font-size:16px;color:#454545;">13</div>
<div style="position:absolute;left:0px;top:686px;width:32px;height:1px;background:#dadada"></div>
<div class="t" style="left:7.10px;top:668.40px;font-size:16px;color:#454545;">14</div>
<div style="position:absolute;left:0px;top:710px;width:32px;height:1px;background:#dadada"></div>
<div class="t" style="left:7.10px;top:692.40px;font-size:16px;color:#454545;">15</div>
<div style="position:absolute;left:0px;top:734px;width:32px;height:1px;background:#dadada"></div>
<div class="t" style="left:7.10px;top:716.40px;font-size:16px;color:#454545;">16</div>
<div style="position:absolute;left:0px;top:758px;width:32px;height:1px;background:#dadada"></div>
<div class="t" style="left:7.10px;top:740.40px;font-size:16px;color:#454545;">17</div>
<div style="position:absolute;left:0px;top:782px;width:32px;height:1px;background:#dadada"></div>
<div class="t" style="left:7.10px;top:764.40px;font-size:16px;color:#454545;">18</div>
<div style="position:absolute;left:0px;top:806px;width:32px;height:1px;background:#dadada"></div>
<div class="t" style="left:7.10px;top:788.40px;font-size:16px;color:#454545;">19</div>
<div style="position:absolute;left:0px;top:830px;width:32px;height:1px;background:#dadada"></div>
<div class="t" style="left:7.10px;top:812.40px;font-size:16px;color:#454545;">20</div>
<div style="position:absolute;left:0px;top:854px;width:32px;height:1px;background:#dadada"></div>
<div class="t" style="left:7.10px;top:836.40px;font-size:16px;color:#454545;">21</div>
<div style="position:absolute;left:0px;top:878px;width:32px;height:1px;background:#dadada"></div>
<div class="t" style="left:7.10px;top:860.40px;font-size:16px;color:#454545;">22</div>
<div style="position:absolute;left:0px;top:902px;width:32px;height:1px;background:#dadada"></div>
<div class="t" style="left:7.10px;top:884.40px;font-size:16px;color:#454545;">23</div>
<div style="position:absolute;left:0px;top:926px;width:32px;height:1px;background:#dadada"></div>
<div class="t" style="left:7.10px;top:908.40px;font-size:16px;color:#454545;">24</div>
<div style="position:absolute;left:0px;top:950px;width:32px;height:1px;background:#dadada"></div>
<div class="t" style="left:7.10px;top:932.40px;font-size:16px;color:#454545;">25</div>
<div style="position:absolute;left:50px;top:341px;width:140px;height:46px;background:#000"></div>
<div style="position:absolute;left:50px;top:386px;width:1px;height:181px;background:#000"></div>
<div style="position:absolute;left:189px;top:386px;width:1px;height:181px;background:#000"></div>
<div style="position:absolute;left:50px;top:416px;width:140px;height:1px;background:#000"></div>
<div style="position:absolute;left:50px;top:446px;width:140px;height:1px;background:#000"></div>
<div style="position:absolute;left:50px;top:476px;width:140px;height:1px;background:#000"></div>
<div style="position:absolute;left:50px;top:506px;width:140px;height:1px;background:#000"></div>
<div style="position:absolute;left:50px;top:536px;width:140px;height:1px;background:#000"></div>
<div style="position:absolute;left:50px;top:566px;width:140px;height:1px;background:#000"></div>
<div class="t" style="left:83.49px;top:355.70px;font-size:18px;font-weight:bold;color:#fff;transform:scaleX(0.9470);">Empresa</div>
<div class="t" style="left:83.40px;top:394.00px;font-size:16px;color:#000;transform:scaleX(0.9332);">Empresa 1</div>
<div class="t" style="left:83.40px;top:424.00px;font-size:16px;color:#000;transform:scaleX(0.9332);">Empresa 2</div>
<div class="t" style="left:83.40px;top:454.00px;font-size:16px;color:#000;transform:scaleX(0.9332);">Empresa 3</div>
<div class="t" style="left:83.40px;top:484.00px;font-size:16px;color:#000;transform:scaleX(0.9332);">Empresa 4</div>
<div class="t" style="left:83.40px;top:514.00px;font-size:16px;color:#000;transform:scaleX(0.9332);">Empresa 5</div>
<div class="t" style="left:83.40px;top:544.00px;font-size:16px;color:#000;transform:scaleX(0.9332);">Empresa 6</div>
<div style="position:absolute;left:207px;top:341px;width:117px;height:46px;background:#000"></div>
<div style="position:absolute;left:207px;top:386px;width:1px;height:181px;background:#000"></div>
<div style="position:absolute;left:323px;top:386px;width:1px;height:181px;background:#000"></div>
<div style="position:absolute;left:207px;top:416px;width:117px;height:1px;background:#000"></div>
<div style="position:absolute;left:207px;top:446px;width:117px;height:1px;background:#000"></div>
<div style="position:absolute;left:207px;top:476px;width:117px;height:1px;background:#000"></div>
<div style="position:absolute;left:207px;top:506px;width:117px;height:1px;background:#000"></div>
<div style="position:absolute;left:207px;top:536px;width:117px;height:1px;background:#000"></div>
<div style="position:absolute;left:207px;top:566px;width:117px;height:1px;background:#000"></div>
<div class="t" style="left:245.58px;top:355.70px;font-size:18px;font-weight:bold;color:#fff;transform:scaleX(0.9470);">Filial</div>
<div class="t" style="left:238.35px;top:394.00px;font-size:16px;color:#000;transform:scaleX(0.9667);">Filial 01</div>
<div class="t" style="left:238.10px;top:424.00px;font-size:16px;color:#000;transform:scaleX(0.9758);">Filial 02</div>
<div class="t" style="left:224.30px;top:454.00px;font-size:16px;color:#000;transform:scaleX(0.9436);">Empresa 03</div>
<div class="t" style="left:224.30px;top:484.00px;font-size:16px;color:#000;transform:scaleX(0.9436);">Empresa 04</div>
<div class="t" style="left:224.30px;top:514.00px;font-size:16px;color:#000;transform:scaleX(0.9436);">Empresa 05</div>
<div class="t" style="left:224.30px;top:544.00px;font-size:16px;color:#000;transform:scaleX(0.9436);">Empresa 06</div>
<div style="position:absolute;left:341px;top:341px;width:436px;height:46px;background:#000"></div>
<div style="position:absolute;left:341px;top:386px;width:1px;height:397px;background:#000"></div>
<div style="position:absolute;left:776px;top:386px;width:1px;height:397px;background:#000"></div>
<div style="position:absolute;left:341px;top:416px;width:436px;height:1px;background:#000"></div>
<div style="position:absolute;left:341px;top:446px;width:436px;height:1px;background:#000"></div>
<div style="position:absolute;left:341px;top:476px;width:436px;height:1px;background:#000"></div>
<div style="position:absolute;left:341px;top:506px;width:436px;height:1px;background:#000"></div>
<div style="position:absolute;left:341px;top:536px;width:436px;height:1px;background:#000"></div>
<div style="position:absolute;left:341px;top:566px;width:436px;height:1px;background:#000"></div>
<div style="position:absolute;left:341px;top:590px;width:436px;height:1px;background:#000"></div>
<div style="position:absolute;left:341px;top:614px;width:436px;height:1px;background:#000"></div>
<div style="position:absolute;left:341px;top:638px;width:436px;height:1px;background:#000"></div>
<div style="position:absolute;left:341px;top:662px;width:436px;height:1px;background:#000"></div>
<div style="position:absolute;left:341px;top:686px;width:436px;height:1px;background:#000"></div>
<div style="position:absolute;left:341px;top:710px;width:436px;height:1px;background:#000"></div>
<div style="position:absolute;left:341px;top:734px;width:436px;height:1px;background:#000"></div>
<div style="position:absolute;left:341px;top:758px;width:436px;height:1px;background:#000"></div>
<div style="position:absolute;left:341px;top:782px;width:436px;height:1px;background:#000"></div>
<div class="t" style="left:536.71px;top:355.70px;font-size:18px;font-weight:bold;color:#fff;transform:scaleX(0.9470);">Setor</div>
<div class="t" style="left:491.45px;top:394.00px;font-size:16px;color:#000;transform:scaleX(0.9544);">Recursos Humanos</div>
<div class="t" style="left:522.35px;top:424.00px;font-size:16px;color:#000;transform:scaleX(0.9678);">Financeiro</div>
<div class="t" style="left:495.55px;top:454.00px;font-size:16px;color:#000;transform:scaleX(0.9696);">Comercial/Vendas</div>
<div class="t" style="left:524.75px;top:484.00px;font-size:16px;color:#000;transform:scaleX(0.9608);">Marketing</div>
<div class="t" style="left:485.95px;top:514.00px;font-size:16px;color:#000;transform:scaleX(0.9596);">Produção/Operações</div>
<div class="t" style="left:527.15px;top:544.00px;font-size:16px;color:#000;transform:scaleX(0.9791);">Logística</div>
<div class="t" style="left:452.95px;top:572.00px;font-size:16px;color:#000;transform:scaleX(0.9932);">Tecnologia da Informação (TI)</div>
<div class="t" style="left:433.70px;top:596.00px;font-size:16px;color:#000;transform:scaleX(0.9813);">Pesquisa e Desenvolvimento (P&amp;D)</div>
<div class="t" style="left:513.60px;top:620.00px;font-size:16px;color:#000;transform:scaleX(1.0197);">Manutenção</div>
<div class="t" style="left:530.35px;top:644.00px;font-size:16px;color:#000;">Jurídico</div>
<div class="t" style="left:476.90px;top:668.00px;font-size:16px;color:#000;transform:scaleX(1.0253);">Compras/Suprimentos</div>
<div class="t" style="left:475.00px;top:692.00px;font-size:16px;color:#000;">Atendimento ao Cliente</div>
<div class="t" style="left:476.45px;top:716.00px;font-size:16px;color:#000;transform:scaleX(0.9865);">Segurança do Trabalho</div>
<div class="t" style="left:483.60px;top:740.00px;font-size:16px;color:#000;transform:scaleX(0.9906);">Gestão da Qualidade</div>
<div class="t" style="left:466.60px;top:764.00px;font-size:16px;color:#000;transform:scaleX(1.0080);">Planejamento Estratégico</div>
<div style="position:absolute;left:794px;top:341px;width:381px;height:46px;background:#000"></div>
<div style="position:absolute;left:794px;top:386px;width:1px;height:567px;background:#000"></div>
<div style="position:absolute;left:1174px;top:386px;width:1px;height:567px;background:#000"></div>
<div style="position:absolute;left:794px;top:416px;width:381px;height:1px;background:#000"></div>
<div style="position:absolute;left:794px;top:446px;width:381px;height:1px;background:#000"></div>
<div style="position:absolute;left:794px;top:476px;width:381px;height:1px;background:#000"></div>
<div style="position:absolute;left:794px;top:506px;width:381px;height:1px;background:#000"></div>
<div style="position:absolute;left:794px;top:536px;width:381px;height:1px;background:#000"></div>
<div style="position:absolute;left:794px;top:566px;width:381px;height:1px;background:#000"></div>
<div style="position:absolute;left:794px;top:590px;width:381px;height:1px;background:#000"></div>
<div style="position:absolute;left:794px;top:614px;width:381px;height:1px;background:#000"></div>
<div style="position:absolute;left:794px;top:638px;width:381px;height:1px;background:#000"></div>
<div style="position:absolute;left:794px;top:662px;width:381px;height:1px;background:#000"></div>
<div style="position:absolute;left:794px;top:686px;width:381px;height:1px;background:#000"></div>
<div style="position:absolute;left:794px;top:710px;width:381px;height:1px;background:#000"></div>
<div style="position:absolute;left:794px;top:734px;width:381px;height:1px;background:#000"></div>
<div style="position:absolute;left:794px;top:758px;width:381px;height:1px;background:#000"></div>
<div style="position:absolute;left:794px;top:782px;width:381px;height:1px;background:#000"></div>
<div style="position:absolute;left:794px;top:806px;width:381px;height:1px;background:#000"></div>
<div style="position:absolute;left:794px;top:830px;width:381px;height:1px;background:#000"></div>
<div style="position:absolute;left:794px;top:854px;width:381px;height:1px;background:#000"></div>
<div style="position:absolute;left:794px;top:878px;width:381px;height:1px;background:#000"></div>
<div style="position:absolute;left:794px;top:902px;width:381px;height:1px;background:#000"></div>
<div style="position:absolute;left:794px;top:926px;width:381px;height:1px;background:#000"></div>
<div style="position:absolute;left:794px;top:950px;width:381px;height:1px;background:#000"></div>
<div class="t" style="left:959.38px;top:355.70px;font-size:18px;font-weight:bold;color:#fff;transform:scaleX(0.9470);">Cargo</div>
<div class="t" style="left:863.05px;top:394.00px;font-size:16px;color:#000;transform:scaleX(0.8760);">ANALISTA DE DESENVOLVIMENTO I</div>
<div class="t" style="left:915.60px;top:424.00px;font-size:16px;color:#000;transform:scaleX(0.8679);">ANALISTA DEVOPS I</div>
<div class="t" style="left:818.90px;top:454.00px;font-size:16px;color:#000;transform:scaleX(0.8659);">COORDENADOR DE INFRA E SUPORTE TECNICO</div>
<div class="t" style="left:864.90px;top:484.00px;font-size:16px;color:#000;transform:scaleX(0.8808);">COORDENADOR DE MANUFATURA</div>
<div class="t" style="left:840.45px;top:514.00px;font-size:16px;color:#000;transform:scaleX(0.8667);">ANALISTA DE QUALIDADE DE SOFTWARE I</div>
<div class="t" style="left:900.25px;top:544.00px;font-size:16px;color:#000;transform:scaleX(0.8579);">TECNICO DE SISTEMAS I</div>
<div class="t" style="left:831.45px;top:572.00px;font-size:16px;color:#000;transform:scaleX(0.9148);">TECNICO DE SEGURANCA DO TRABALHO I</div>
<div class="t" style="left:885.50px;top:596.00px;font-size:16px;color:#000;transform:scaleX(0.9101);">GERENTE DE COMPLIANCE</div>
<div class="t" style="left:816.40px;top:620.00px;font-size:16px;color:#000;transform:scaleX(0.9133);">COORDENADOR DE TECNOLOGIA E SERVIÇOS</div>
<div class="t" style="left:907.30px;top:644.00px;font-size:16px;color:#000;transform:scaleX(0.9073);">ANALISTA DE QSMS II</div>
<div class="t" style="left:919.10px;top:668.00px;font-size:16px;color:#000;transform:scaleX(0.9156);">JOVEM APRENDIZ</div>
<div class="t" style="left:916.10px;top:692.00px;font-size:16px;color:#000;transform:scaleX(0.9253);">PRODUCT OWNER</div>
<div class="t" style="left:845.30px;top:716.00px;font-size:16px;color:#000;transform:scaleX(0.9146);">ANALISTA DE RECURSOS HUMANOS III</div>
<div class="t" style="left:907.00px;top:740.00px;font-size:16px;color:#000;transform:scaleX(0.9344);">TECNICO MECANICO</div>
<div class="t" style="left:838.00px;top:764.00px;font-size:16px;color:#000;transform:scaleX(0.9018);">TECNICO DE OPERAÇÕES ESPECIALISTA</div>
<div class="t" style="left:810.25px;top:788.00px;font-size:16px;color:#000;transform:scaleX(0.8933);">AUXILIAR DE GESTÃO DE CONTRATOS E CUSTOS</div>
<div class="t" style="left:914.65px;top:812.00px;font-size:16px;color:#000;transform:scaleX(0.9206);">ANALISTA FISCAL II</div>
<div class="t" style="left:845.00px;top:836.00px;font-size:16px;color:#000;transform:scaleX(0.9240);">COORDENADOR DE CONTROLADORIA</div>
<div class="t" style="left:865.60px;top:860.00px;font-size:16px;color:#000;transform:scaleX(0.9245);">ENGENHEIRO DE AUTOMAÇÃO II</div>
<div class="t" style="left:823.05px;top:884.00px;font-size:16px;color:#000;transform:scaleX(0.8965);">ANALISTA DE INFRAESTRUTURA E SUPORTE I</div>
<div class="t" style="left:901.35px;top:908.00px;font-size:16px;color:#000;transform:scaleX(0.8830);">ASSESSOR EXECUTIVO</div>
<div class="t" style="left:854.75px;top:932.00px;font-size:16px;color:#000;transform:scaleX(0.9217);">ANALISTA DE DESENVOLVIMENTO II</div>
<div style="position:absolute;left:1192px;top:341px;width:494px;height:46px;background:#000"></div>
<div style="position:absolute;left:1192px;top:386px;width:1px;height:493px;background:#000"></div>
<div style="position:absolute;left:1315px;top:386px;width:1px;height:493px;background:#000"></div>
<div style="position:absolute;left:1557px;top:386px;width:1px;height:493px;background:#000"></div>
<div style="position:absolute;left:1685px;top:386px;width:1px;height:493px;background:#000"></div>
<div style="position:absolute;left:1192px;top:416px;width:494px;height:1px;background:#000"></div>
<div style="position:absolute;left:1192px;top:446px;width:494px;height:1px;background:#000"></div>
<div style="position:absolute;left:1192px;top:476px;width:494px;height:1px;background:#000"></div>
<div style="position:absolute;left:1192px;top:506px;width:494px;height:1px;background:#000"></div>
<div style="position:absolute;left:1192px;top:536px;width:494px;height:1px;background:#000"></div>
<div style="position:absolute;left:1192px;top:566px;width:494px;height:1px;background:#000"></div>
<div style="position:absolute;left:1192px;top:590px;width:494px;height:1px;background:#000"></div>
<div style="position:absolute;left:1192px;top:614px;width:494px;height:1px;background:#000"></div>
<div style="position:absolute;left:1192px;top:638px;width:494px;height:1px;background:#000"></div>
<div style="position:absolute;left:1192px;top:662px;width:494px;height:1px;background:#000"></div>
<div style="position:absolute;left:1192px;top:686px;width:494px;height:1px;background:#000"></div>
<div style="position:absolute;left:1192px;top:710px;width:494px;height:1px;background:#000"></div>
<div style="position:absolute;left:1192px;top:734px;width:494px;height:1px;background:#000"></div>
<div style="position:absolute;left:1192px;top:758px;width:494px;height:1px;background:#000"></div>
<div style="position:absolute;left:1192px;top:782px;width:494px;height:1px;background:#000"></div>
<div style="position:absolute;left:1192px;top:806px;width:494px;height:1px;background:#000"></div>
<div style="position:absolute;left:1192px;top:830px;width:494px;height:1px;background:#000"></div>
<div style="position:absolute;left:1192px;top:854px;width:494px;height:1px;background:#000"></div>
<div style="position:absolute;left:1192px;top:878px;width:494px;height:1px;background:#000"></div>
<div class="t" style="left:1224.14px;top:355.70px;font-size:18px;font-weight:bold;color:#fff;transform:scaleX(0.9470);">Médico</div>
<div class="t" style="left:1379.15px;top:355.70px;font-size:18px;font-weight:bold;color:#fff;transform:scaleX(0.9470);">Especialidade</div>
<div class="t" style="left:1586.43px;top:355.70px;font-size:18px;font-weight:bold;color:#fff;transform:scaleX(0.9470);">Registro</div>
<div class="t" style="left:1222.25px;top:394.00px;font-size:16px;color:#000;transform:scaleX(0.9627);">Medico 1</div>
<div class="t" style="left:1333.85px;top:394.00px;font-size:16px;color:#000;transform:scaleX(0.8606);">GINECOLOGIA E OBSTETRÍCIA</div>
<div class="t" style="left:1571.00px;top:394.00px;font-size:16px;color:#000;transform:scaleX(1.0191);">1111110-CRM</div>
<div class="t" style="left:1222.25px;top:424.00px;font-size:16px;color:#000;transform:scaleX(0.9627);">Medico 2</div>
<div class="t" style="left:1349.85px;top:424.00px;font-size:16px;color:#000;transform:scaleX(0.8782);">MEDICINA DO TRABALHO</div>
<div class="t" style="left:1571.00px;top:424.00px;font-size:16px;color:#000;transform:scaleX(1.0191);">1111110-CRM</div>
<div class="t" style="left:1222.25px;top:454.00px;font-size:16px;color:#000;transform:scaleX(0.9627);">Medico 3</div>
<div class="t" style="left:1381.25px;top:454.00px;font-size:16px;color:#000;transform:scaleX(0.8860);">CLÍNICO GERAL</div>
<div class="t" style="left:1571.00px;top:454.00px;font-size:16px;color:#000;transform:scaleX(1.0191);">1111110-CRM</div>
<div class="t" style="left:1222.25px;top:484.00px;font-size:16px;color:#000;transform:scaleX(0.9627);">Medico 4</div>
<div class="t" style="left:1380.35px;top:484.00px;font-size:16px;color:#000;transform:scaleX(0.8734);">DERMATOLOGIA</div>
<div class="t" style="left:1571.00px;top:484.00px;font-size:16px;color:#000;transform:scaleX(1.0191);">1111110-CRM</div>
<div class="t" style="left:1222.25px;top:514.00px;font-size:16px;color:#000;transform:scaleX(0.9627);">Medico 5</div>
<div class="t" style="left:1381.25px;top:514.00px;font-size:16px;color:#000;transform:scaleX(0.8756);">OFTALMOLOGIA</div>
<div class="t" style="left:1571.00px;top:514.00px;font-size:16px;color:#000;transform:scaleX(1.0191);">1111110-CRM</div>
<div class="t" style="left:1222.25px;top:544.00px;font-size:16px;color:#000;transform:scaleX(0.9627);">Medico 6</div>
<div class="t" style="left:1398.95px;top:544.00px;font-size:16px;color:#000;transform:scaleX(0.8773);">UROLOGIA</div>
<div class="t" style="left:1571.00px;top:544.00px;font-size:16px;color:#000;transform:scaleX(1.0191);">1111110-CRM</div>
<div class="t" style="left:1222.25px;top:572.00px;font-size:16px;color:#000;transform:scaleX(0.9627);">Medico 7</div>
<div class="t" style="left:1383.95px;top:572.00px;font-size:16px;color:#000;transform:scaleX(0.9367);">CARDIOLOGIA</div>
<div class="t" style="left:1571.00px;top:572.00px;font-size:16px;color:#000;transform:scaleX(1.0191);">1111110-CRM</div>
<div class="t" style="left:1222.25px;top:596.00px;font-size:16px;color:#000;transform:scaleX(0.9627);">Medico 8</div>
<div class="t" style="left:1366.65px;top:596.00px;font-size:16px;color:#000;transform:scaleX(0.9455);">ENDOCRINOLOGIA</div>
<div class="t" style="left:1571.00px;top:596.00px;font-size:16px;color:#000;transform:scaleX(1.0191);">1111110-CRM</div>
<div class="t" style="left:1222.25px;top:620.00px;font-size:16px;color:#000;transform:scaleX(0.9627);">Medico 9</div>
<div class="t" style="left:1358.80px;top:620.00px;font-size:16px;color:#000;transform:scaleX(0.9253);">CIRURGIA VASCULAR</div>
<div class="t" style="left:1571.00px;top:620.00px;font-size:16px;color:#000;transform:scaleX(1.0191);">1111110-CRM</div>
<div class="t" style="left:1217.85px;top:644.00px;font-size:16px;color:#000;transform:scaleX(0.9658);">Medico 10</div>
<div class="t" style="left:1360.15px;top:644.00px;font-size:16px;color:#000;transform:scaleX(0.9341);">COLOPROCTOLOGIA</div>
<div class="t" style="left:1571.00px;top:644.00px;font-size:16px;color:#000;transform:scaleX(1.0191);">1111110-CRM</div>
<div class="t" style="left:1217.85px;top:668.00px;font-size:16px;color:#000;transform:scaleX(0.9816);">Medico 11</div>
<div class="t" style="left:1386.05px;top:668.00px;font-size:16px;color:#000;transform:scaleX(0.9364);">ENDOSCOPIA</div>
<div class="t" style="left:1571.00px;top:668.00px;font-size:16px;color:#000;transform:scaleX(1.0191);">1111110-CRM</div>
<div class="t" style="left:1217.85px;top:692.00px;font-size:16px;color:#000;transform:scaleX(0.9658);">Medico 12</div>
<div class="t" style="left:1321.55px;top:692.00px;font-size:16px;color:#000;transform:scaleX(0.9183);">ORTOPEDIA E TRAUMATOLOGIA</div>
<div class="t" style="left:1571.00px;top:692.00px;font-size:16px;color:#000;transform:scaleX(1.0191);">1111110-CRM</div>
<div class="t" style="left:1217.85px;top:716.00px;font-size:16px;color:#000;transform:scaleX(0.9658);">Medico 13</div>
<div class="t" style="left:1352.45px;top:716.00px;font-size:16px;color:#000;transform:scaleX(0.9124);">GASTROENTEROLOGIA</div>
<div class="t" style="left:1571.00px;top:716.00px;font-size:16px;color:#000;transform:scaleX(1.0191);">1111110-CRM</div>
<div class="t" style="left:1217.85px;top:740.00px;font-size:16px;color:#000;transform:scaleX(0.9658);">Medico 14</div>
<div class="t" style="left:1339.05px;top:740.00px;font-size:16px;color:#000;transform:scaleX(0.9374);">OTORRINOLARINGOLOGIA</div>
<div class="t" style="left:1571.00px;top:740.00px;font-size:16px;color:#000;transform:scaleX(1.0191);">1111110-CRM</div>
<div class="t" style="left:1217.85px;top:764.00px;font-size:16px;color:#000;transform:scaleX(0.9658);">Medico 15</div>
<div class="t" style="left:1389.85px;top:764.00px;font-size:16px;color:#000;transform:scaleX(0.9215);">PSIQUIATRIA</div>
<div class="t" style="left:1571.00px;top:764.00px;font-size:16px;color:#000;transform:scaleX(1.0191);">1111110-CRM</div>
<div class="t" style="left:1217.85px;top:788.00px;font-size:16px;color:#000;transform:scaleX(0.9658);">Medico 16</div>
<div class="t" style="left:1363.55px;top:788.00px;font-size:16px;color:#000;transform:scaleX(0.9104);">CIRURGIA PLÁSTICA</div>
<div class="t" style="left:1571.00px;top:788.00px;font-size:16px;color:#000;transform:scaleX(1.0191);">1111110-CRM</div>
<div class="t" style="left:1217.85px;top:812.00px;font-size:16px;color:#000;transform:scaleX(0.9658);">Medico 17</div>
<div class="t" style="left:1387.00px;top:812.00px;font-size:16px;color:#000;transform:scaleX(0.9288);">MASTOLOGIA</div>
<div class="t" style="left:1571.00px;top:812.00px;font-size:16px;color:#000;transform:scaleX(1.0191);">1111110-CRM</div>
<div class="t" style="left:1217.85px;top:836.00px;font-size:16px;color:#000;transform:scaleX(0.9658);">Medico 18</div>
<div class="t" style="left:1373.15px;top:836.00px;font-size:16px;color:#000;transform:scaleX(0.9242);">NEUROCIRURGIA</div>
<div class="t" style="left:1571.00px;top:836.00px;font-size:16px;color:#000;transform:scaleX(1.0191);">1111110-CRM</div>
<div class="t" style="left:1217.85px;top:860.00px;font-size:16px;color:#000;transform:scaleX(0.9658);">Medico 19</div>
<div class="t" style="left:1373.90px;top:860.00px;font-size:16px;color:#000;transform:scaleX(0.9130);">CIRURGIA GERAL</div>
<div class="t" style="left:1571.00px;top:860.00px;font-size:16px;color:#000;transform:scaleX(1.0191);">1111110-CRM</div>
<div style="position:absolute;left:49px;top:340px;width:142px;height:48px;border:2px solid #107c41;box-sizing:border-box;"></div>
<div style="position:absolute;left:51px;top:342px;width:138px;height:44px;border:1px solid #fff;box-sizing:border-box;"></div>
<div style="position:absolute;left:186px;top:383px;width:7px;height:7px;background:#107c41;border:1px solid #fff;box-sizing:border-box"></div>
<div style="position:absolute;left:1895px;top:270px;width:22px;height:683px;background:#f3f3f3;border-radius:10px"></div>
<svg style="position:absolute;left:1899px;top:274px;" width="14" height="10" viewBox="0 0 14 10"><path d="M1 9 L7 2 L13 9 Z" fill="#6e6e6e"/></svg>
<div style="position:absolute;left:1901px;top:291px;width:11px;height:118px;background:#707070;border-radius:6px"></div>
<svg style="position:absolute;left:1899px;top:939px;" width="14" height="10" viewBox="0 0 14 10"><path d="M1 1 L7 8 L13 1 Z" fill="#6e6e6e"/></svg>
<div style="position:absolute;left:9px;top:232px;width:167px;height:30px;background:#fff;border:1px solid #d0d0d0;border-bottom-color:#c2c2c2;border-radius:6px;box-sizing:border-box"></div>
<div class="t" style="left:16.30px;top:239.40px;font-size:16px;color:#242424;transform:scaleX(0.9708);">B3</div>
<svg style="position:absolute;left:156.5px;top:242.5px;" width="13.0" height="11.0" viewBox="0 0 13.0 11.0"><path d="M1 2.75 L6.5 8.25 L12.0 2.75" fill="none" stroke="#242424" stroke-width="1.3"/></svg>
<div style="position:absolute;left:187.5px;top:242px;width:3px;height:3px;background:#333"></div>
<div style="position:absolute;left:187.5px;top:247.5px;width:3px;height:3px;background:#333"></div>
<div style="position:absolute;left:187.5px;top:253px;width:3px;height:3px;background:#333"></div>
<div style="position:absolute;left:202px;top:232px;width:107px;height:30px;background:#fff;border:1px solid #d5d5d5;border-bottom-color:#c8c8c8;border-radius:6px;box-sizing:border-box"></div>
<svg style="position:absolute;left:210px;top:240px;" width="15" height="15" viewBox="0 0 15 15"><path d="M1 1 L14 14 M14 1 L1 14" stroke="#a8a8a8" stroke-width="1.2"/></svg>
<svg style="position:absolute;left:238px;top:240px;" width="20" height="15" viewBox="0 0 20 15"><path d="M1 8 L6.5 13.5 L19 1" fill="none" stroke="#a8a8a8" stroke-width="1.2"/></svg>
<svg style="position:absolute;left:268px;top:239px;" width="20" height="18" viewBox="0 0 20 18"><path d="M4.5 17 C6 12 7 6 8 3.5 C8.8 1.5 10.5 0.8 12 1.5 M4.5 6.5 H11" fill="none" stroke="#262626" stroke-width="1.5" stroke-linecap="round"/><path d="M10.5 7.5 C12 7 13 8 13.5 10 L15 14.5 C15.5 16 16.5 16 18 15 M18.5 7.5 C17 7.8 15 10 11.5 15.5" fill="none" stroke="#262626" stroke-width="1.4" stroke-linecap="round"/></svg>
<svg style="position:absolute;left:295px;top:244px;" width="10" height="8" viewBox="0 0 10 8"><path d="M1 2.0 L5 6.0 L9 2.0" fill="none" stroke="#8a8a8a" stroke-width="1.1"/></svg>
<div style="position:absolute;left:314px;top:232px;width:1595px;height:30px;background:#fff;border:1px solid #d5d5d5;border-bottom-color:#c8c8c8;border-radius:6px;box-sizing:border-box"></div>
<div class="t" style="left:328.00px;top:239.40px;font-size:16px;color:#242424;transform:scaleX(0.9684);">Empresa</div>
<svg style="position:absolute;left:1891.0px;top:240.5px;" width="13.0" height="11.0" viewBox="0 0 13.0 11.0"><path d="M1 2.75 L6.5 8.25 L12.0 2.75" fill="none" stroke="#242424" stroke-width="1.3"/></svg>
<div style="position:absolute;left:0px;top:953px;width:1919px;height:40px;background:linear-gradient(90deg,#dde9e2 0%,#e0e9e4 60%,#e2e9e6 85%,#e5e8e7 100%)"></div>
<div style="position:absolute;left:240px;top:953px;width:930px;height:35px;background:#e7e8e8;border-radius:8px 8px 0 0"></div>
<div style="position:absolute;left:140px;top:953px;width:100px;height:35px;background:#fff;border-radius:0 0 8px 8px"></div>
<svg style="position:absolute;left:29px;top:963px;" width="10" height="16" viewBox="0 0 10 16"><path d="M8 1 L2 8 L8 15" fill="none" stroke="#8a8a8a" stroke-width="1.3"/></svg>
<svg style="position:absolute;left:70px;top:963px;" width="10" height="16" viewBox="0 0 10 16"><path d="M2 1 L8 8 L2 15" fill="none" stroke="#8a8a8a" stroke-width="1.3"/></svg>
<div class="t" style="left:150.00px;top:960.55px;font-size:17px;font-weight:bold;color:#1f1f1f;transform:scaleX(0.9622);">Cadastros</div>
<div style="position:absolute;left:150px;top:983px;width:80px;height:3px;background:#107c41;border-radius:1px"></div>
<div style="position:absolute;left:245px;top:962px;width:1px;height:22px;background:#cfcfcf"></div>
<div style="position:absolute;left:382px;top:962px;width:1px;height:22px;background:#cfcfcf"></div>
<div style="position:absolute;left:562px;top:962px;width:1px;height:22px;background:#cfcfcf"></div>
<div style="position:absolute;left:733.5px;top:962px;width:1px;height:22px;background:#cfcfcf"></div>
<div style="position:absolute;left:843.5px;top:962px;width:1px;height:22px;background:#cfcfcf"></div>
<div class="t" style="left:264.50px;top:966.05px;font-size:17px;color:#242424;transform:scaleX(0.9915);">Funcionarios</div>
<div class="t" style="left:397.70px;top:966.05px;font-size:17px;font-weight:bold;color:#242424;transform:scaleX(0.9889);">exames realizados</div>
<div class="t" style="left:581.60px;top:966.05px;font-size:17px;color:#242424;transform:scaleX(0.9858);">exames previstos</div>
<div class="t" style="left:751.60px;top:966.05px;font-size:17px;color:#242424;transform:scaleX(0.9902);">atestados</div>
<svg style="position:absolute;left:895px;top:965px;" width="16" height="16" viewBox="0 0 16 16"><path d="M8 1 V15 M1 8 H15" stroke="#333" stroke-width="1.5"/></svg>
<div style="position:absolute;left:1153.5px;top:966px;width:3px;height:3.2px;background:#333"></div>
<div style="position:absolute;left:1153.5px;top:971.5px;width:3px;height:3.2px;background:#333"></div>
<div style="position:absolute;left:1153.5px;top:977px;width:3px;height:3.2px;background:#333"></div>
<div style="position:absolute;left:1180px;top:962px;width:715px;height:21px;background:#f3f3f3;border-radius:10px"></div>
<svg style="position:absolute;left:1182px;top:967px;" width="10" height="12" viewBox="0 0 10 12"><path d="M9 1 L2 6 L9 11 Z" fill="#6e6e6e"/></svg>
<div style="position:absolute;left:1196px;top:967px;width:666px;height:11px;background:#707070;border-radius:6px"></div>
<svg style="position:absolute;left:1880px;top:967px;" width="10" height="12" viewBox="0 0 10 12"><path d="M1 1 L8 6 L1 11 Z" fill="#6e6e6e"/></svg>
<div style="position:absolute;left:0px;top:993px;width:1919px;height:22px;background:#f3f3f3"></div>
<div class="t" style="left:13.50px;top:1000.10px;font-size:14px;color:#333;transform:scaleX(0.9091);">Pronto</div>
<svg style="position:absolute;left:78px;top:999px;" width="18" height="16" viewBox="0 0 18 16"><rect x="0.6" y="0.6" width="16.8" height="15" fill="none" stroke="#444" stroke-width="1.1"/><path d="M0.6 3.5 H17.4 M3 7 H7 M3 10 H6 M3 13 H6" stroke="#444" stroke-width="1"/><circle cx="12" cy="11" r="4" fill="#fff" stroke="#444" stroke-width="1.1"/><circle cx="12" cy="11" r="1.8" fill="#444"/></svg>
<svg style="position:absolute;left:118px;top:998px;" width="18" height="17" viewBox="0 0 18 17"><circle cx="8" cy="2.5" r="2" fill="none" stroke="#333" stroke-width="1.1"/><path d="M1 5.5 C5 7 11 7 15 5.5 M8 7 V11 L4 16.5 M8 11 L11 14" fill="none" stroke="#333" stroke-width="1.2"/><path d="M11 11 L17 17 M17 11 L11 17" stroke="#333" stroke-width="1.1"/></svg>
<div class="t" style="left:140.60px;top:1000.10px;font-size:14px;font-weight:bold;color:#262626;transform:scaleX(0.9054);">Acessibilidade: investigar</div>
<svg style="position:absolute;left:1380px;top:999px;" width="18" height="16" viewBox="0 0 18 16"><rect x="0.6" y="0.6" width="15" height="11" fill="none" stroke="#444" stroke-width="1.1"/><circle cx="12" cy="12" r="3.5" fill="#fff" stroke="#444" stroke-width="1.2"/></svg>
<div class="t" style="left:1401.00px;top:1000.10px;font-size:14px;color:#333;transform:scaleX(0.9290);">Exibir Configurações</div>
<div style="position:absolute;left:1546px;top:993px;width:50px;height:22px;background:#dcdcdc"></div>
<svg style="position:absolute;left:1562px;top:999px;" width="17" height="16" viewBox="0 0 17 16"><rect x="0.6" y="0.6" width="15.8" height="15" fill="none" stroke="#444" stroke-width="1.2"/><path d="M5.8 0.6 V15.6 M11 0.6 V15.6 M0.6 5.6 H16.4 M0.6 10.6 H16.4" stroke="#444" stroke-width="1.1"/></svg>
<svg style="position:absolute;left:1612px;top:999px;" width="18" height="16" viewBox="0 0 18 16"><rect x="0.6" y="0.6" width="16.8" height="15" fill="none" stroke="#444" stroke-width="1.2"/><rect x="4" y="3.5" width="10" height="9" fill="none" stroke="#444" stroke-width="1"/><path d="M6 6 H12 M6 8 H12 M6 10 H12" stroke="#444" stroke-width="0.9"/></svg>
<svg style="position:absolute;left:1662px;top:999px;" width="18" height="16" viewBox="0 0 18 16"><path d="M0.6 15.6 V0.6 H17.4 V15.6 M0.6 9 H17.4 M6 0.6 V9 M12 0.6 V9" fill="none" stroke="#444" stroke-width="1.2"/></svg>
<div style="position:absolute;left:1702px;top:1006px;width:11px;height:1.2px;background:#444"></div>
<div style="position:absolute;left:1719px;top:1007px;width:125px;height:1px;background:#777"></div>
<div style="position:absolute;left:1779px;top:1000px;width:5px;height:15px;background:#6a6a6a"></div>
<svg style="position:absolute;left:1848px;top:1000px;" width="13" height="13" viewBox="0 0 13 13"><path d="M6.5 0.5 V12.5 M0.5 6.5 H12.5" stroke="#444" stroke-width="1.2"/></svg>
<div class="t" style="left:1876.00px;top:1000.52px;font-size:13.5px;color:#333;transform:scaleX(0.8978);">100%</div>
</body></html>
